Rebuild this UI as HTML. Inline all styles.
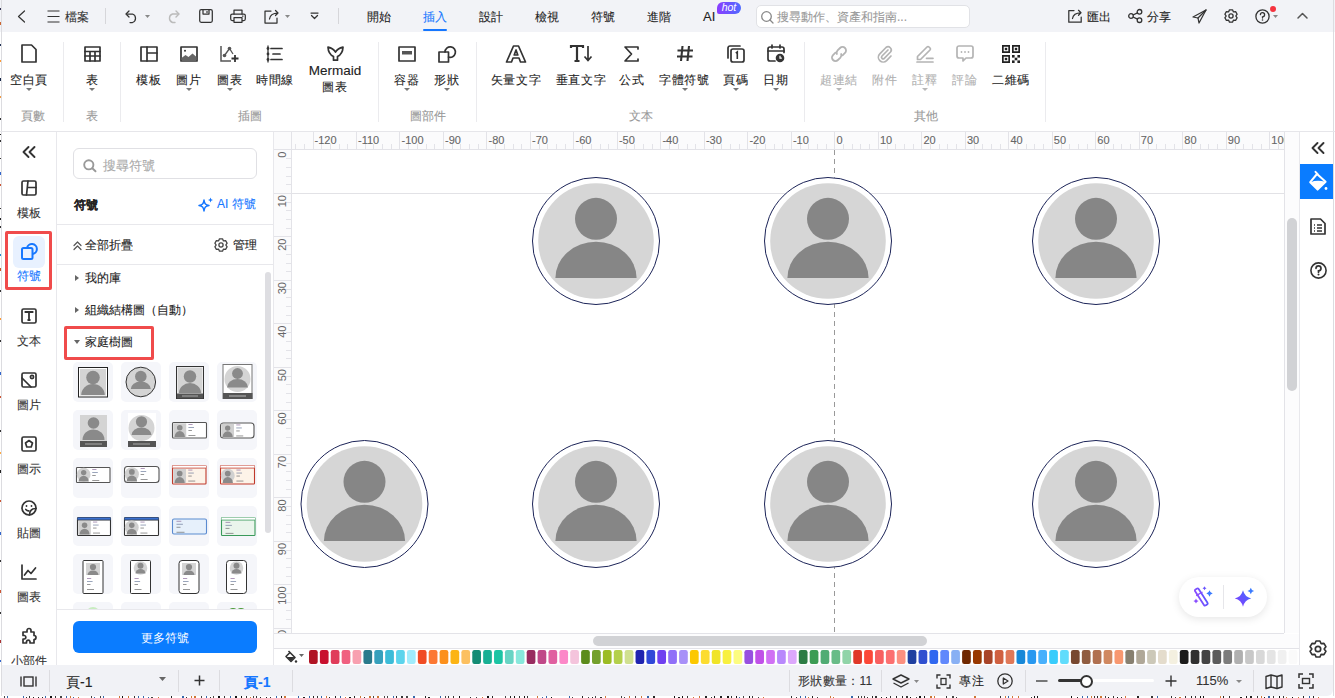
<!DOCTYPE html><html><head><meta charset="utf-8"><style>
html,body{margin:0;padding:0;}
body{width:1335px;height:698px;position:relative;overflow:hidden;background:#fff;font-family:'Liberation Sans', sans-serif;}
.t{position:absolute;white-space:nowrap;-webkit-text-stroke:0.1px currentColor;}
svg{overflow:visible}
</style></head><body>
<div style="position:absolute;left:0px;top:0px;width:1335px;height:32px;background:#f2f3f7"></div>
<div style="position:absolute;left:1px;top:0px;width:1px;height:696px;background:#dcdce0"></div>
<div style="position:absolute;left:1333px;top:0px;width:1px;height:696px;background:#dcdce0"></div>
<svg style="position:absolute;left:17px;top:10px" width="9" height="13" viewBox="0 0 9 13" fill="none"><path d="M7.5 1L1.5 6.5L7.5 12" stroke="#333" stroke-width="1.2" stroke-linecap="round" stroke-linejoin="round"/></svg>
<svg style="position:absolute;left:47px;top:10px" width="13" height="13" viewBox="0 0 13 13" fill="none"><path d="M0.5 1H12.5M0.5 6.5H12.5M0.5 12H12.5" stroke="#333" stroke-width="1.2"/></svg>
<div class="t" style="left:65px;top:9px;font-size:12px;line-height:16px;color:#333;font-weight:normal;">檔案</div>
<div style="position:absolute;left:105px;top:8px;width:1px;height:16px;background:#d6d6da"></div>
<svg style="position:absolute;left:125px;top:10px" width="13" height="13" viewBox="0 0 13 13" fill="none"><path d="M4 1L1 4L4 7" stroke="#333" stroke-width="1.25" stroke-linecap="round" stroke-linejoin="round"/><path d="M1.5 4H7.5A4.5 4.5 0 0 1 7.5 12.5H5" stroke="#333" stroke-width="1.25" stroke-linecap="round" stroke-linejoin="round"/></svg>
<svg style="position:absolute;left:145.0px;top:15.0px" width="5" height="3" viewBox="0 0 5 3" fill="none"><path d="M0 0H5L2.5 3Z" fill="#888"/></svg>
<svg style="position:absolute;left:167px;top:10px" width="13" height="13" viewBox="0 0 13 13" fill="none"><path d="M9 1L12 4L9 7" stroke="#bbb" stroke-width="1.4" stroke-linecap="round" stroke-linejoin="round"/><path d="M11.5 4H5.5A4.5 4.5 0 0 0 5.5 12.5H8" stroke="#bbb" stroke-width="1.4" stroke-linecap="round"/></svg>
<svg style="position:absolute;left:199px;top:9px" width="14" height="14" viewBox="0 0 14 14" fill="none"><rect x="0.7" y="0.7" width="12.6" height="12.6" rx="1.5" stroke="#333" stroke-width="1.25" stroke-linecap="round" stroke-linejoin="round"/><path d="M4 1V5H10V1" stroke="#333" stroke-width="1.25" stroke-linecap="round" stroke-linejoin="round"/><path d="M8 2.5V3.5" stroke="#333" stroke-width="1.25" stroke-linecap="round" stroke-linejoin="round"/></svg>
<svg style="position:absolute;left:230px;top:9px" width="16" height="14" viewBox="0 0 16 14" fill="none"><path d="M4 5V1H12V5" stroke="#333" stroke-width="1.25" stroke-linecap="round" stroke-linejoin="round"/><rect x="0.7" y="5" width="14.6" height="6.5" rx="1.5" stroke="#333" stroke-width="1.25" stroke-linecap="round" stroke-linejoin="round"/><rect x="4" y="8.5" width="8" height="4.8" fill="#f2f3f7" stroke="#333" stroke-width="1.25" stroke-linecap="round" stroke-linejoin="round"/><path d="M12.5 7H13" stroke="#333" stroke-width="1.25" stroke-linecap="round" stroke-linejoin="round"/></svg>
<svg style="position:absolute;left:264px;top:9px" width="16" height="15" viewBox="0 0 16 15" fill="none"><path d="M7 2H1V14H13V9" stroke="#333" stroke-width="1.25" stroke-linecap="round" stroke-linejoin="round"/><path d="M5.5 10C6 6 9 4 14 4M11.5 1.5L14 4L11.5 6.5" stroke="#333" stroke-width="1.25" stroke-linecap="round" stroke-linejoin="round"/></svg>
<svg style="position:absolute;left:285.0px;top:15.0px" width="5" height="3" viewBox="0 0 5 3" fill="none"><path d="M0 0H5L2.5 3Z" fill="#888"/></svg>
<svg style="position:absolute;left:310px;top:12px" width="9" height="8" viewBox="0 0 9 8" fill="none"><path d="M1 1H8" stroke="#333" stroke-width="1.25" stroke-linecap="round" stroke-linejoin="round"/><path d="M1.5 3.5L4.5 6.5L7.5 3.5" stroke="#333" stroke-width="1.25" stroke-linecap="round" stroke-linejoin="round"/></svg>
<div style="position:absolute;left:338px;top:8px;width:1px;height:16px;background:#d6d6da"></div>
<div class="t" style="left:367px;top:9px;font-size:12px;line-height:16px;color:#222;font-weight:normal;">開始</div>
<div class="t" style="left:423px;top:9px;font-size:12px;line-height:16px;color:#1677ff;font-weight:normal;">插入</div>
<div class="t" style="left:479px;top:9px;font-size:12px;line-height:16px;color:#222;font-weight:normal;">設計</div>
<div class="t" style="left:535px;top:9px;font-size:12px;line-height:16px;color:#222;font-weight:normal;">檢視</div>
<div class="t" style="left:591px;top:9px;font-size:12px;line-height:16px;color:#222;font-weight:normal;">符號</div>
<div class="t" style="left:647px;top:9px;font-size:12px;line-height:16px;color:#222;font-weight:normal;">進階</div>
<div style="position:absolute;left:423px;top:29px;width:24px;height:2px;background:#1677ff;border-radius:1px"></div>
<div class="t" style="left:703px;top:9px;font-size:13px;line-height:16px;color:#222;font-weight:normal;">AI</div>
<div style="position:absolute;left:717px;top:2px;width:24px;height:12px;border-radius:6px 6px 6px 2px;background:linear-gradient(90deg,#8b3dff,#4e6bff);color:#fff;font-size:10.5px;line-height:11px;text-align:center;font-style:italic;font-family:'Liberation Sans',sans-serif">hot</div>
<div style="position:absolute;left:756px;top:5px;width:214px;height:23px;background:#fff;border:1px solid #e1e2e6;border-radius:5px;box-sizing:border-box"></div>
<svg style="position:absolute;left:761px;top:11px" width="13" height="13" viewBox="0 0 13 13" fill="none"><circle cx="5.5" cy="5.5" r="4.8" stroke="#888" stroke-width="1.3"/><path d="M9 9L12 12" stroke="#888" stroke-width="1.3" stroke-linecap="round"/></svg>
<div class="t" style="left:777px;top:9px;font-size:12px;line-height:16px;color:#999;font-weight:normal;">搜尋動作、資產和指南...</div>
<svg style="position:absolute;left:1068px;top:9px" width="15" height="14" viewBox="0 0 15 14" fill="none"><path d="M6 1.5H0.8V13.2H13.2V8" stroke="#333" stroke-width="1.25" stroke-linecap="round" stroke-linejoin="round"/><path d="M4.5 9.5C5 6 8 3.8 13 3.8M10.5 1.3L13 3.8L10.5 6.3" stroke="#333" stroke-width="1.25" stroke-linecap="round" stroke-linejoin="round"/></svg>
<div class="t" style="left:1087px;top:9px;font-size:12px;line-height:16px;color:#222;font-weight:normal;">匯出</div>
<svg style="position:absolute;left:1128px;top:9px" width="15" height="14" viewBox="0 0 15 14" fill="none"><circle cx="3" cy="7" r="2.3" stroke="#333" stroke-width="1.3"/><circle cx="11.5" cy="2.8" r="2.3" stroke="#333" stroke-width="1.3"/><circle cx="11.5" cy="11.2" r="2.3" stroke="#333" stroke-width="1.3"/><path d="M5 6L9.5 3.8M5 8L9.5 10.2" stroke="#333" stroke-width="1.3"/></svg>
<div class="t" style="left:1147px;top:9px;font-size:12px;line-height:16px;color:#222;font-weight:normal;">分享</div>
<svg style="position:absolute;left:1192px;top:9px" width="15" height="15" viewBox="0 0 15 15" fill="none"><path d="M14 1L1 8L6 9L7 14L14 1Z" stroke="#333" stroke-width="1.25" stroke-linecap="round" stroke-linejoin="round"/><path d="M6 9L14 1" stroke="#333" stroke-width="1.25" stroke-linecap="round" stroke-linejoin="round"/></svg>
<svg style="position:absolute;left:1224px;top:9px" width="14" height="14" viewBox="0 0 14 14" fill="none"><path d="M4.65 2.70 L5.48 0.78 L8.52 0.78 L9.35 2.70 L9.55 2.82 L11.62 2.57 L13.14 5.21 L11.90 6.88 L11.90 7.12 L13.14 8.79 L11.62 11.43 L9.55 11.18 L9.35 11.30 L8.52 13.22 L5.48 13.22 L4.65 11.30 L4.45 11.18 L2.38 11.43 L0.86 8.79 L2.10 7.12 L2.10 6.88 L0.86 5.21 L2.38 2.57 L4.45 2.82Z" stroke="#333" stroke-width="1.3" stroke-linejoin="round"/><circle cx="7" cy="7" r="2.1" stroke="#333" stroke-width="1.3"/></svg>
<svg style="position:absolute;left:1255px;top:9px" width="15" height="15" viewBox="0 0 15 15" fill="none"><circle cx="7.5" cy="7.5" r="6.6" stroke="#333" stroke-width="1.3"/><path d="M5.4 5.6A2.1 2.1 0 1 1 7.5 7.8V9" stroke="#333" stroke-width="1.3" stroke-linecap="round"/><circle cx="7.5" cy="11" r="0.8" fill="#333"/></svg>
<div style="position:absolute;left:1270px;top:6px;width:6px;height:6px;background:#f5333f;border-radius:50%"></div>
<svg style="position:absolute;left:1273.0px;top:14.5px" width="5" height="3" viewBox="0 0 5 3" fill="none"><path d="M0 0H5L2.5 3Z" fill="#888"/></svg>
<svg style="position:absolute;left:1297px;top:12px" width="11" height="7" viewBox="0 0 11 7" fill="none"><path d="M1 6L5.5 1.5L10 6" stroke="#555" stroke-width="1.5" stroke-linecap="round" stroke-linejoin="round"/></svg>
<div style="position:absolute;left:0px;top:131px;width:1335px;height:1px;background:#e6e6ea"></div>
<div style="position:absolute;left:63px;top:42px;width:1px;height:80px;background:#ebebee"></div>
<div style="position:absolute;left:120px;top:42px;width:1px;height:80px;background:#ebebee"></div>
<div style="position:absolute;left:378px;top:42px;width:1px;height:80px;background:#ebebee"></div>
<div style="position:absolute;left:476px;top:42px;width:1px;height:80px;background:#ebebee"></div>
<div style="position:absolute;left:804px;top:42px;width:1px;height:80px;background:#ebebee"></div>
<div style="position:absolute;left:1045px;top:42px;width:1px;height:80px;background:#ebebee"></div>
<svg style="position:absolute;left:21px;top:44px" width="16" height="19" viewBox="0 0 16 19" fill="none"><path d="M1 1H10.5L15 5.5V18H1Z" stroke="#333" stroke-width="1.7" stroke-linejoin="round" stroke-linecap="round"/></svg>
<div class="t" style="left:-31.0px;width:120px;text-align:center;top:72px;font-size:12px;line-height:16px;color:#222;font-weight:normal;letter-spacing:0.6px">空白頁</div>
<svg style="position:absolute;left:26.0px;top:88.0px" width="6" height="3" viewBox="0 0 6 3" fill="none"><path d="M0 0H6L3.0 3Z" fill="#777"/></svg>
<svg style="position:absolute;left:84px;top:46px" width="17" height="16" viewBox="0 0 17 16" fill="none"><rect x="1" y="1" width="15" height="14" stroke="#333" stroke-width="1.7" stroke-linejoin="round" stroke-linecap="round"/><path d="M1 5.5H16M1 10H16M6 5.5V15M11 5.5V15" stroke="#333" stroke-width="1.7" stroke-linejoin="round" stroke-linecap="round"/></svg>
<div class="t" style="left:32.0px;width:120px;text-align:center;top:72px;font-size:12px;line-height:16px;color:#222;font-weight:normal;letter-spacing:0.6px">表</div>
<svg style="position:absolute;left:89.0px;top:88.0px" width="6" height="3" viewBox="0 0 6 3" fill="none"><path d="M0 0H6L3.0 3Z" fill="#777"/></svg>
<svg style="position:absolute;left:140px;top:46px" width="18" height="16" viewBox="0 0 18 16" fill="none"><rect x="1" y="1" width="16" height="14" stroke="#333" stroke-width="1.7" stroke-linejoin="round" stroke-linecap="round"/><path d="M7 1V15M7 7H17" stroke="#333" stroke-width="1.7" stroke-linejoin="round" stroke-linecap="round"/></svg>
<div class="t" style="left:89.0px;width:120px;text-align:center;top:72px;font-size:12px;line-height:16px;color:#222;font-weight:normal;letter-spacing:0.6px">模板</div>
<svg style="position:absolute;left:180px;top:46px" width="18" height="16" viewBox="0 0 18 16" fill="none"><rect x="1" y="1" width="16" height="14" stroke="#333" stroke-width="1.7" stroke-linejoin="round" stroke-linecap="round"/><circle cx="5" cy="4.8" r="1" fill="#333"/><path d="M1.5 14.5V12L5.5 9L8.5 11L12.5 7.5L16.5 11V14.5Z" fill="#666"/></svg>
<div class="t" style="left:129.0px;width:120px;text-align:center;top:72px;font-size:12px;line-height:16px;color:#222;font-weight:normal;letter-spacing:0.6px">圖片</div>
<svg style="position:absolute;left:186.0px;top:88.0px" width="6" height="3" viewBox="0 0 6 3" fill="none"><path d="M0 0H6L3.0 3Z" fill="#777"/></svg>
<svg style="position:absolute;left:220px;top:45px" width="20" height="17" viewBox="0 0 20 17" fill="none"><path d="M1 1V16H11" stroke="#555" stroke-width="1.5"/><path d="M4.5 10.5L9.5 3.5L13 9" stroke="#555" stroke-width="1.3"/><circle cx="4.5" cy="10.5" r="1.8" fill="#555"/><circle cx="9.5" cy="3.5" r="1.8" fill="#555"/><path d="M15 10V17M11.5 13.5H18.5" stroke="#333" stroke-width="1.8"/></svg>
<div class="t" style="left:170.0px;width:120px;text-align:center;top:72px;font-size:12px;line-height:16px;color:#222;font-weight:normal;letter-spacing:0.6px">圖表</div>
<svg style="position:absolute;left:227.0px;top:88.0px" width="6" height="3" viewBox="0 0 6 3" fill="none"><path d="M0 0H6L3.0 3Z" fill="#777"/></svg>
<svg style="position:absolute;left:266px;top:45px" width="18" height="18" viewBox="0 0 18 18" fill="none"><path d="M2 0.5V17.5" stroke="#333" stroke-width="1.3"/><circle cx="2" cy="3.5" r="1.4" fill="#333"/><circle cx="2" cy="9" r="1.4" fill="#333"/><circle cx="2" cy="14.5" r="1.4" fill="#333"/><path d="M5 3.5H16M7 9H14M5 14.5H16" stroke="#333" stroke-width="1.7" stroke-linejoin="round" stroke-linecap="round"/></svg>
<div class="t" style="left:215.0px;width:120px;text-align:center;top:72px;font-size:12px;line-height:16px;color:#222;font-weight:normal;letter-spacing:0.6px">時間線</div>
<svg style="position:absolute;left:398px;top:46px" width="18" height="16" viewBox="0 0 18 16" fill="none"><rect x="1" y="1" width="16" height="14" stroke="#333" stroke-width="1.7" stroke-linejoin="round" stroke-linecap="round"/><rect x="4" y="5" width="10" height="3.5" fill="#555"/></svg>
<div class="t" style="left:347.0px;width:120px;text-align:center;top:72px;font-size:12px;line-height:16px;color:#222;font-weight:normal;letter-spacing:0.6px">容器</div>
<svg style="position:absolute;left:404.0px;top:88.0px" width="6" height="3" viewBox="0 0 6 3" fill="none"><path d="M0 0H6L3.0 3Z" fill="#777"/></svg>
<svg style="position:absolute;left:438px;top:45px" width="18" height="18" viewBox="0 0 18 18" fill="none"><rect x="1" y="7" width="9.5" height="10" stroke="#333" stroke-width="1.7" stroke-linejoin="round" stroke-linecap="round"/><path d="M7 7A5.2 5.2 0 1 1 10.5 12" stroke="#333" stroke-width="1.7" stroke-linejoin="round" stroke-linecap="round"/></svg>
<div class="t" style="left:387.0px;width:120px;text-align:center;top:72px;font-size:12px;line-height:16px;color:#222;font-weight:normal;letter-spacing:0.6px">形狀</div>
<svg style="position:absolute;left:444.0px;top:88.0px" width="6" height="3" viewBox="0 0 6 3" fill="none"><path d="M0 0H6L3.0 3Z" fill="#777"/></svg>
<svg style="position:absolute;left:505px;top:45px" width="22" height="18" viewBox="0 0 22 18" fill="none"><path d="M1.5 17L8.5 1H13.5L20.5 17H15.5L14 13H8L6.5 17Z" stroke="#333" stroke-width="1.7" stroke-linejoin="round" stroke-linecap="round"/><path d="M9.2 10H12.8L11 5Z" stroke="#333" stroke-width="1.7" stroke-linejoin="round" stroke-linecap="round"/></svg>
<div class="t" style="left:456.0px;width:120px;text-align:center;top:72px;font-size:12px;line-height:16px;color:#222;font-weight:normal;letter-spacing:0.6px">矢量文字</div>
<svg style="position:absolute;left:570px;top:45px" width="22" height="17" viewBox="0 0 22 17" fill="none"><path d="M1 3V1H13V3M7 1V16M4.5 16H9.5" stroke="#333" stroke-width="2.2" stroke-linejoin="miter"/><path d="M18 1V15M14.5 11.5L18 15.5L21.5 11.5" stroke="#333" stroke-width="1.7"/></svg>
<div class="t" style="left:521.0px;width:120px;text-align:center;top:72px;font-size:12px;line-height:16px;color:#222;font-weight:normal;letter-spacing:0.6px">垂直文字</div>
<svg style="position:absolute;left:624px;top:46px" width="15" height="16" viewBox="0 0 15 16" fill="none"><path d="M14 3V1H1L7.5 8L1 15H14V13" stroke="#333" stroke-width="1.7" stroke-linejoin="round" stroke-linecap="round"/></svg>
<div class="t" style="left:572.0px;width:120px;text-align:center;top:72px;font-size:12px;line-height:16px;color:#222;font-weight:normal;letter-spacing:0.6px">公式</div>
<svg style="position:absolute;left:676px;top:45px" width="18" height="17" viewBox="0 0 18 17" fill="none"><path d="M6.5 1L5 16M13 1L11.5 16M1.5 5.5H17M1 11.5H16.5" stroke="#333" stroke-width="2.1"/></svg>
<div class="t" style="left:624.5px;width:120px;text-align:center;top:72px;font-size:12px;line-height:16px;color:#222;font-weight:normal;letter-spacing:0.6px">字體符號</div>
<svg style="position:absolute;left:681.5px;top:88.0px" width="6" height="3" viewBox="0 0 6 3" fill="none"><path d="M0 0H6L3.0 3Z" fill="#777"/></svg>
<svg style="position:absolute;left:727px;top:45px" width="18" height="18" viewBox="0 0 18 18" fill="none"><path d="M1 13V3A2 2 0 0 1 3 1H13" stroke="#333" stroke-width="1.7" stroke-linejoin="round" stroke-linecap="round"/><rect x="4" y="4" width="13" height="13" rx="2" stroke="#333" stroke-width="1.7" stroke-linejoin="round" stroke-linecap="round"/><path d="M8.8 8.2L10.3 7V14" stroke="#333" stroke-width="1.6"/></svg>
<div class="t" style="left:676.0px;width:120px;text-align:center;top:72px;font-size:12px;line-height:16px;color:#222;font-weight:normal;letter-spacing:0.6px">頁碼</div>
<svg style="position:absolute;left:733.0px;top:88.0px" width="6" height="3" viewBox="0 0 6 3" fill="none"><path d="M0 0H6L3.0 3Z" fill="#777"/></svg>
<svg style="position:absolute;left:767px;top:44px" width="18" height="19" viewBox="0 0 18 19" fill="none"><path d="M8 17H3A2 2 0 0 1 1 15V5A2 2 0 0 1 3 3H15A2 2 0 0 1 17 5V8.5" stroke="#333" stroke-width="1.7" stroke-linejoin="round" stroke-linecap="round"/><path d="M1 7H17M5 1V4M13 1V4" stroke="#333" stroke-width="1.7" stroke-linejoin="round" stroke-linecap="round"/><circle cx="13" cy="14" r="4.3" fill="#333"/><path d="M13 11.8V14.2H14.8" stroke="#fff" stroke-width="1.2"/></svg>
<div class="t" style="left:716.0px;width:120px;text-align:center;top:72px;font-size:12px;line-height:16px;color:#222;font-weight:normal;letter-spacing:0.6px">日期</div>
<svg style="position:absolute;left:773.0px;top:88.0px" width="6" height="3" viewBox="0 0 6 3" fill="none"><path d="M0 0H6L3.0 3Z" fill="#777"/></svg>
<svg style="position:absolute;left:830px;top:45px" width="18" height="18" viewBox="0 0 18 18" fill="none"><g transform="rotate(-45 9 9)" stroke="#b4b4b4" stroke-width="1.8" fill="none" stroke-linecap="round"><path d="M7.5 5.5H4A3.5 3.5 0 0 0 4 12.5H7.5A3.5 3.5 0 0 0 10.5 10.5"/><path d="M10.5 12.5H14A3.5 3.5 0 0 0 14 5.5H10.5A3.5 3.5 0 0 0 7.5 7.5"/></g></svg>
<div class="t" style="left:779.0px;width:120px;text-align:center;top:72px;font-size:12px;line-height:16px;color:#b0b0b0;font-weight:normal;letter-spacing:0.6px">超連結</div>
<svg style="position:absolute;left:836.0px;top:88.0px" width="6" height="3" viewBox="0 0 6 3" fill="none"><path d="M0 0H6L3.0 3Z" fill="#b8b8b8"/></svg>
<svg style="position:absolute;left:876px;top:45px" width="18" height="18" viewBox="0 0 18 18" fill="none"><path d="M12 5L6 11A1.6 1.6 0 0 0 8.3 13.3L14.5 7A3.2 3.2 0 0 0 10 2.5L3.8 8.8A4.8 4.8 0 0 0 10.6 15.6L15 11" stroke="#b4b4b4" stroke-width="1.7" stroke-linejoin="round" stroke-linecap="round"/></svg>
<div class="t" style="left:825.0px;width:120px;text-align:center;top:72px;font-size:12px;line-height:16px;color:#b0b0b0;font-weight:normal;letter-spacing:0.6px">附件</div>
<svg style="position:absolute;left:916px;top:45px" width="18" height="18" viewBox="0 0 18 18" fill="none"><path d="M1.5 14.5V11.5L11 2A1.4 1.4 0 0 1 13 2L14 3A1.4 1.4 0 0 1 14 5L4.5 14.5Z" stroke="#b4b4b4" stroke-width="1.7" stroke-linejoin="round" stroke-linecap="round"/><path d="M10.5 13.3H17M1 17H17" stroke="#b4b4b4" stroke-width="1.7" stroke-linejoin="round" stroke-linecap="round"/></svg>
<div class="t" style="left:865.0px;width:120px;text-align:center;top:72px;font-size:12px;line-height:16px;color:#b0b0b0;font-weight:normal;letter-spacing:0.6px">註釋</div>
<svg style="position:absolute;left:922.0px;top:88.0px" width="6" height="3" viewBox="0 0 6 3" fill="none"><path d="M0 0H6L3.0 3Z" fill="#b8b8b8"/></svg>
<svg style="position:absolute;left:956px;top:45px" width="18" height="17" viewBox="0 0 18 17" fill="none"><path d="M3 1H15A2 2 0 0 1 17 3V11A2 2 0 0 1 15 13H10L7 16V13H3A2 2 0 0 1 1 11V3A2 2 0 0 1 3 1Z" stroke="#b4b4b4" stroke-width="1.7" stroke-linejoin="round" stroke-linecap="round"/><circle cx="5.5" cy="7" r="0.9" fill="#b4b4b4"/><circle cx="9" cy="7" r="0.9" fill="#b4b4b4"/><circle cx="12.5" cy="7" r="0.9" fill="#b4b4b4"/></svg>
<div class="t" style="left:905.0px;width:120px;text-align:center;top:72px;font-size:12px;line-height:16px;color:#b0b0b0;font-weight:normal;letter-spacing:0.6px">評論</div>
<svg style="position:absolute;left:1002px;top:45px" width="18" height="18" viewBox="0 0 18 18" fill="none"><g fill="#222"><path d="M0 0H8V8H0ZM1.7 1.7V6.3H6.3V1.7Z" fill-rule="evenodd"/><path d="M10 0H18V8H10ZM11.7 1.7V6.3H16.3V1.7Z" fill-rule="evenodd"/><path d="M0 10H8V18H0ZM1.7 11.7V16.3H6.3V11.7Z" fill-rule="evenodd"/><rect x="2.8" y="2.8" width="2.4" height="2.4"/><rect x="12.8" y="2.8" width="2.4" height="2.4"/><rect x="2.8" y="12.8" width="2.4" height="2.4"/><rect x="10" y="10" width="2.6" height="2.6"/><rect x="15.4" y="10" width="2.6" height="2.6"/><rect x="12.7" y="12.7" width="2.6" height="2.6"/><rect x="10" y="15.4" width="2.6" height="2.6"/><rect x="15.4" y="15.4" width="2.6" height="2.6"/></g></svg>
<div class="t" style="left:951.0px;width:120px;text-align:center;top:72px;font-size:12px;line-height:16px;color:#222;font-weight:normal;letter-spacing:0.6px">二維碼</div>
<svg style="position:absolute;left:327px;top:46px" width="17" height="15" viewBox="0 0 17 15" fill="none"><path d="M6.5 14.2V10.5C3.5 9 1.2 5.5 1 1.2C4 1.8 7 3.5 8.5 6.2C10 3.5 13 1.8 16 1.2C15.8 5.5 13.5 9 10.5 10.5V14.2Z" stroke="#333" stroke-width="1.7" stroke-linejoin="round" stroke-linecap="round"/></svg>
<div class="t" style="left:275.0px;width:120px;text-align:center;top:64px;font-size:13.5px;line-height:14px;color:#222;font-weight:normal;">Mermaid</div>
<div class="t" style="left:275.0px;width:120px;text-align:center;top:79px;font-size:12px;line-height:16px;color:#222;font-weight:normal;letter-spacing:0.6px">圖表</div>
<div class="t" style="left:-27.0px;width:120px;text-align:center;top:108px;font-size:12px;line-height:16px;color:#999;font-weight:normal;">頁數</div>
<div class="t" style="left:32.0px;width:120px;text-align:center;top:108px;font-size:12px;line-height:16px;color:#999;font-weight:normal;">表</div>
<div class="t" style="left:190.0px;width:120px;text-align:center;top:108px;font-size:12px;line-height:16px;color:#999;font-weight:normal;">插圖</div>
<div class="t" style="left:368.0px;width:120px;text-align:center;top:108px;font-size:12px;line-height:16px;color:#999;font-weight:normal;">圖部件</div>
<div class="t" style="left:581.0px;width:120px;text-align:center;top:108px;font-size:12px;line-height:16px;color:#999;font-weight:normal;">文本</div>
<div class="t" style="left:866.0px;width:120px;text-align:center;top:108px;font-size:12px;line-height:16px;color:#999;font-weight:normal;">其他</div>
<div style="position:absolute;left:56px;top:132px;width:1px;height:533px;background:#e8e8ec"></div>
<svg style="position:absolute;left:22px;top:146px" width="14" height="12" viewBox="0 0 14 12" fill="none"><path d="M6.5 1L1.5 6L6.5 11M12.5 1L7.5 6L12.5 11" stroke="#333" stroke-width="1.9" stroke-linecap="round" stroke-linejoin="round"/></svg>
<svg style="position:absolute;left:21px;top:180px" width="16" height="16" viewBox="0 0 16 16" fill="none"><rect x="1" y="1" width="14" height="14" rx="1.5" stroke="#333" stroke-width="1.7" stroke-linejoin="round" stroke-linecap="round"/><path d="M7 1L5.5 15M6.5 7.5H15" stroke="#333" stroke-width="1.7" stroke-linejoin="round" stroke-linecap="round"/></svg>
<div class="t" style="left:1.0px;width:56px;text-align:center;top:205px;font-size:12px;line-height:16px;color:#333;font-weight:normal;">模板</div>
<svg style="position:absolute;left:21px;top:308px" width="16" height="16" viewBox="0 0 16 16" fill="none"><rect x="1" y="1" width="14" height="14" rx="1.5" stroke="#333" stroke-width="1.7" stroke-linejoin="round" stroke-linecap="round"/><path d="M4.5 5V4H11.5V5M8 4V12M6.5 12H9.5" stroke="#333" stroke-width="1.8"/></svg>
<div class="t" style="left:1.0px;width:56px;text-align:center;top:333px;font-size:12px;line-height:16px;color:#333;font-weight:normal;">文本</div>
<svg style="position:absolute;left:21px;top:372px" width="16" height="16" viewBox="0 0 16 16" fill="none"><rect x="1" y="1" width="14" height="14" rx="1.5" stroke="#333" stroke-width="1.7" stroke-linejoin="round" stroke-linecap="round"/><path d="M1 6L10 15" stroke="#333" stroke-width="1.7" stroke-linejoin="round" stroke-linecap="round"/><circle cx="11" cy="5" r="1.6" stroke="#333" stroke-width="1.7" stroke-linejoin="round" stroke-linecap="round"/></svg>
<div class="t" style="left:1.0px;width:56px;text-align:center;top:397px;font-size:12px;line-height:16px;color:#333;font-weight:normal;">圖片</div>
<svg style="position:absolute;left:21px;top:436px" width="16" height="16" viewBox="0 0 16 16" fill="none"><rect x="1" y="1" width="14" height="14" rx="1.5" stroke="#333" stroke-width="1.7" stroke-linejoin="round" stroke-linecap="round"/><path d="M8 4.5L11.5 7L10.2 11H5.8L4.5 7Z" stroke="#333" stroke-width="1.7" stroke-linejoin="round" stroke-linecap="round"/></svg>
<div class="t" style="left:1.0px;width:56px;text-align:center;top:461px;font-size:12px;line-height:16px;color:#333;font-weight:normal;">圖示</div>
<svg style="position:absolute;left:21px;top:500px" width="16" height="16" viewBox="0 0 16 16" fill="none"><circle cx="8" cy="8" r="7" stroke="#333" stroke-width="1.7" stroke-linejoin="round" stroke-linecap="round"/><path d="M15 8.5C11 8.5 8.5 11 8.5 15" stroke="#333" stroke-width="1.7" stroke-linejoin="round" stroke-linecap="round"/><circle cx="5.5" cy="6" r="0.9" fill="#333"/><circle cx="10.5" cy="6" r="0.9" fill="#333"/><path d="M4.8 9.5C5.8 10.6 6.8 11 7.8 10.8" stroke="#333" stroke-width="1.7" stroke-linejoin="round" stroke-linecap="round"/></svg>
<div class="t" style="left:1.0px;width:56px;text-align:center;top:525px;font-size:12px;line-height:16px;color:#333;font-weight:normal;">貼圖</div>
<svg style="position:absolute;left:21px;top:564px" width="16" height="16" viewBox="0 0 16 16" fill="none"><path d="M1 1V15H15" stroke="#333" stroke-width="1.7" stroke-linejoin="round" stroke-linecap="round"/><path d="M3.5 11L7 6.5L10 9.5L14.5 4" stroke="#333" stroke-width="1.7" stroke-linejoin="round" stroke-linecap="round"/></svg>
<div class="t" style="left:1.0px;width:56px;text-align:center;top:589px;font-size:12px;line-height:16px;color:#333;font-weight:normal;">圖表</div>
<svg style="position:absolute;left:21px;top:628px" width="16" height="16" viewBox="0 0 16 16" fill="none"><path d="M6 2.5A2 2 0 0 1 10 2.5V4H13V7.5A2 2 0 0 1 13 11.5V15H9V13.5A1.8 1.8 0 0 0 5.5 13.5V15H2V11H3.5A1.8 1.8 0 0 0 3.5 7.5H2V4H6Z" stroke="#333" stroke-width="1.7" stroke-linejoin="round" stroke-linecap="round"/></svg>
<div class="t" style="left:1.0px;width:56px;text-align:center;top:653px;font-size:12px;line-height:16px;color:#333;font-weight:normal;">小部件</div>
<div style="position:absolute;left:13px;top:236px;width:32px;height:32px;background:#e8f1ff;border-radius:6px"></div>
<svg style="position:absolute;left:21px;top:243px" width="17" height="17" viewBox="0 0 17 17" fill="none"><rect x="1" y="5" width="10.5" height="11" rx="1.5" stroke="#1677ff" stroke-width="2"/><path d="M6 5A5 5 0 1 1 11.5 11" stroke="#1677ff" stroke-width="2"/></svg>
<div class="t" style="left:1.0px;width:56px;text-align:center;top:268px;font-size:12px;line-height:16px;color:#1677ff;font-weight:normal;">符號</div>
<div style="position:absolute;left:5px;top:231px;width:47px;height:59px;border:3.5px solid #f04b4b;border-radius:2px;box-sizing:border-box"></div>
<div style="position:absolute;left:273px;top:132px;width:1px;height:533px;background:#e8e8ec"></div>
<div style="position:absolute;left:73px;top:148px;width:184px;height:31px;border:1px solid #e0e0e4;border-radius:6px;box-sizing:border-box;background:#fff"></div>
<svg style="position:absolute;left:83px;top:159px" width="14" height="13" viewBox="0 0 14 13" fill="none"><circle cx="5.8" cy="5.8" r="4.6" stroke="#999" stroke-width="1.9"/><path d="M9.3 9.3L12.5 12.3" stroke="#999" stroke-width="1.9" stroke-linecap="round"/></svg>
<div class="t" style="left:103px;top:158px;font-size:13px;line-height:16px;color:#aaa;font-weight:normal;">搜尋符號</div>
<div class="t" style="left:74px;top:197px;font-size:12px;line-height:16px;color:#222;font-weight:bold;">符號</div>
<svg style="position:absolute;left:197px;top:197px" width="17" height="15" viewBox="0 0 17 15" fill="none"><path d="M7 3C7.6 7 8.5 8 12 8.5C8.5 9 7.6 10 7 14C6.4 10 5.5 9 2 8.5C5.5 8 6.4 7 7 3Z" stroke="#1677ff" stroke-width="1.5" stroke-linejoin="round"/><path d="M13.5 0.5L14.2 2.3L16 3L14.2 3.7L13.5 5.5L12.8 3.7L11 3L12.8 2.3Z" fill="#1677ff"/></svg>
<div class="t" style="left:217px;top:196px;font-size:12px;line-height:16px;color:#1677ff;font-weight:normal;">AI 符號</div>
<div style="position:absolute;left:56px;top:224px;width:217px;height:1px;background:#e8e8ec"></div>
<svg style="position:absolute;left:73px;top:241px" width="9" height="9" viewBox="0 0 9 9" fill="none"><path d="M1 4.5L4.5 1L8 4.5M1 8.5L4.5 5L8 8.5" stroke="#555" stroke-width="1.2" stroke-linecap="round" stroke-linejoin="round"/></svg>
<div class="t" style="left:85px;top:237px;font-size:12px;line-height:16px;color:#222;font-weight:normal;">全部折疊</div>
<svg style="position:absolute;left:214px;top:238px" width="14" height="14" viewBox="0 0 14 14" fill="none"><path d="M4.65 2.70 L5.48 0.78 L8.52 0.78 L9.35 2.70 L9.55 2.82 L11.62 2.57 L13.14 5.21 L11.90 6.88 L11.90 7.12 L13.14 8.79 L11.62 11.43 L9.55 11.18 L9.35 11.30 L8.52 13.22 L5.48 13.22 L4.65 11.30 L4.45 11.18 L2.38 11.43 L0.86 8.79 L2.10 7.12 L2.10 6.88 L0.86 5.21 L2.38 2.57 L4.45 2.82Z" stroke="#444" stroke-width="1.3" stroke-linejoin="round"/><circle cx="7" cy="7" r="2.1" stroke="#444" stroke-width="1.3"/></svg>
<div class="t" style="left:233px;top:237px;font-size:12px;line-height:16px;color:#222;font-weight:normal;">管理</div>
<div style="position:absolute;left:56px;top:264px;width:217px;height:1px;background:#e8e8ec"></div>
<svg style="position:absolute;left:75px;top:275px" width="4" height="6" viewBox="0 0 4 6" fill="none"><path d="M0 0L4 3L0 6Z" fill="#666"/></svg>
<div class="t" style="left:85px;top:270px;font-size:12px;line-height:16px;color:#222;font-weight:normal;">我的庫</div>
<svg style="position:absolute;left:75px;top:307px" width="4" height="6" viewBox="0 0 4 6" fill="none"><path d="M0 0L4 3L0 6Z" fill="#666"/></svg>
<div class="t" style="left:85px;top:302px;font-size:12px;line-height:16px;color:#222;font-weight:normal;">組織結構圖（自動）</div>
<svg style="position:absolute;left:74px;top:340px" width="6" height="4" viewBox="0 0 6 4" fill="none"><path d="M0 0H6L3 4Z" fill="#666"/></svg>
<div class="t" style="left:85px;top:334px;font-size:12px;line-height:16px;color:#222;font-weight:normal;">家庭樹圖</div>
<div style="position:absolute;left:64px;top:326px;width:90px;height:34px;border:3.5px solid #f04b4b;border-radius:2px;box-sizing:border-box"></div>
<div style="position:absolute;left:265px;top:272px;width:6px;height:261px;background:#dedee2;border-radius:3px"></div>
<div style="position:absolute;left:56px;top:609px;width:217px;height:1px;background:#e8e8ec"></div>
<div style="position:absolute;left:73px;top:621px;width:184px;height:32px;background:#0a7cff;border-radius:6px;color:#fff;font-size:12px;line-height:34px;text-align:center">更多符號</div>
<div style="position:absolute;left:56px;top:362px;width:210px;height:247px;overflow:hidden">
<div style="position:absolute;left:17px;top:0px;width:40px;height:40px;background:#f5f6fa;border-radius:5px"></div>
<svg style="position:absolute;left:17px;top:0px" width="40" height="40" viewBox="0 0 40 40"><rect x="5.5" y="5.5" width="29" height="29.5" fill="#fff" stroke="#222" stroke-width="1"/><rect x="7" y="7" width="26" height="26.5" fill="#d4d4d4"/><circle cx="20" cy="15.5" r="6.8" fill="#8a8a8a"/><path d="M8.25 33A11.75 11 0 0 1 31.75 33Z" fill="#8a8a8a"/></svg>
<div style="position:absolute;left:65px;top:0px;width:40px;height:40px;background:#f5f6fa;border-radius:5px"></div>
<svg style="position:absolute;left:65px;top:0px" width="40" height="40" viewBox="0 0 40 40"><circle cx="19.8" cy="20" r="14.8" fill="#d4d4d4" stroke="#333" stroke-width="1"/><circle cx="19.8" cy="14.5" r="5.8" fill="#8a8a8a"/><path d="M9.8 27A10.0 7.5 0 0 1 29.8 27Z" fill="#8a8a8a"/></svg>
<div style="position:absolute;left:113px;top:0px;width:40px;height:40px;background:#f5f6fa;border-radius:5px"></div>
<svg style="position:absolute;left:113px;top:0px" width="40" height="40" viewBox="0 0 40 40"><rect x="7.5" y="4.5" width="27" height="32" fill="#fff" stroke="#333" stroke-width="1"/><rect x="8.5" y="5.5" width="25" height="26" fill="#d4d4d4"/><circle cx="21" cy="14.5" r="6.2" fill="#8a8a8a"/><path d="M10.0 31A11.0 10 0 0 1 32.0 31Z" fill="#8a8a8a"/><rect x="8" y="31.5" width="26" height="5" fill="#555"/><rect x="13" y="33.5" width="16" height="1" fill="#aaa"/></svg>
<div style="position:absolute;left:161px;top:0px;width:40px;height:40px;background:#f5f6fa;border-radius:5px"></div>
<svg style="position:absolute;left:161px;top:0px" width="40" height="40" viewBox="0 0 40 40"><rect x="6" y="2.5" width="29" height="34" fill="#fff" stroke="#777" stroke-width="1"/><circle cx="20.5" cy="17" r="13" fill="#d4d4d4"/><circle cx="20.5" cy="11.5" r="5.4" fill="#8a8a8a"/><path d="M10.0 25.5A10.5 8.5 0 0 1 31.0 25.5Z" fill="#8a8a8a"/><rect x="6" y="31" width="29.5" height="6" fill="#555"/><rect x="12" y="33.5" width="17" height="1" fill="#bbb"/></svg>
<div style="position:absolute;left:17px;top:48px;width:40px;height:40px;background:#f5f6fa;border-radius:5px"></div>
<svg style="position:absolute;left:17px;top:48px" width="40" height="40" viewBox="0 0 40 40"><rect x="7" y="5" width="27" height="26" fill="#d4d4d4"/><circle cx="20.5" cy="13" r="5.8" fill="#8a8a8a"/><path d="M9.5 30A11.0 10.5 0 0 1 31.5 30Z" fill="#8a8a8a"/><rect x="7" y="31" width="27" height="6" fill="#555"/><rect x="12" y="33.5" width="17" height="1" fill="#aaa"/></svg>
<div style="position:absolute;left:65px;top:48px;width:40px;height:40px;background:#f5f6fa;border-radius:5px"></div>
<svg style="position:absolute;left:65px;top:48px" width="40" height="40" viewBox="0 0 40 40"><rect x="7" y="3" width="28" height="34" fill="#fff"/><circle cx="20.5" cy="18" r="13" fill="#d4d4d4"/><circle cx="20.5" cy="11.8" r="5.6" fill="#8a8a8a"/><path d="M10.5 25A10.0 7.5 0 0 1 30.5 25Z" fill="#8a8a8a"/><rect x="7" y="31" width="28" height="6" fill="#555"/><rect x="12" y="33.5" width="17" height="1" fill="#aaa"/></svg>
<div style="position:absolute;left:113px;top:48px;width:40px;height:40px;background:#f5f6fa;border-radius:5px"></div>
<svg style="position:absolute;left:113px;top:48px" width="40" height="40" viewBox="0 0 40 40"><rect x="3.5" y="12.5" width="34" height="15.5" rx="1" fill="#fff" stroke="#555" stroke-width="1.1"/><rect x="4.3" y="13.3" width="12.92" height="13.9" fill="#d0d0d0"/><circle cx="10.76" cy="17.782" r="2.7800000000000002" fill="#8a8a8a"/><path d="M5.592 27.0A5.168 5.881999999999998 0 0 1 15.928 27.0Z" fill="#8a8a8a"/><rect x="19.42" y="14.0" width="4.2" height="0.9" fill="#8a6a9a" opacity="0.75"/><rect x="19.42" y="17.0" width="5.6000000000000005" height="0.9" fill="#6a7a9a" opacity="0.75"/><rect x="19.42" y="20.0" width="3.5" height="0.9" fill="#666" opacity="0.75"/><rect x="19.42" y="25.0" width="7" height="0.9" fill="#666" opacity="0.75"/></svg>
<div style="position:absolute;left:161px;top:48px;width:40px;height:40px;background:#f5f6fa;border-radius:5px"></div>
<svg style="position:absolute;left:161px;top:48px" width="40" height="40" viewBox="0 0 40 40"><rect x="3.5" y="13" width="33.5" height="15" rx="3" fill="#fff" stroke="#555" stroke-width="1.1"/><rect x="4.3" y="13.8" width="12.73" height="13.4" fill="#d0d0d0"/><circle cx="10.665" cy="18.092" r="2.68" fill="#8a8a8a"/><path d="M5.572999999999999 27A5.0920000000000005 5.692 0 0 1 15.757 27Z" fill="#8a8a8a"/><rect x="19.23" y="14.5" width="4.2" height="0.9" fill="#8a6a9a" opacity="0.75"/><rect x="19.23" y="17.5" width="5.6000000000000005" height="0.9" fill="#6a7a9a" opacity="0.75"/><rect x="19.23" y="20.5" width="3.5" height="0.9" fill="#666" opacity="0.75"/><rect x="19.23" y="25.5" width="7" height="0.9" fill="#666" opacity="0.75"/></svg>
<div style="position:absolute;left:17px;top:96px;width:40px;height:40px;background:#f5f6fa;border-radius:5px"></div>
<svg style="position:absolute;left:17px;top:96px" width="40" height="40" viewBox="0 0 40 40"><rect x="3.5" y="9.5" width="33.5" height="15" rx="0.8" fill="#fff" stroke="#555" stroke-width="1.1"/><circle cx="10.665" cy="16.7" r="6.865" fill="#d0d0d0"/><circle cx="10.665" cy="14.592" r="2.68" fill="#8a8a8a"/><path d="M5.572999999999999 23.5A5.0920000000000005 5.692 0 0 1 15.757 23.5Z" fill="#8a8a8a"/><rect x="19.23" y="11.0" width="4.2" height="0.9" fill="#8a6a9a" opacity="0.75"/><rect x="19.23" y="14.0" width="5.6000000000000005" height="0.9" fill="#6a7a9a" opacity="0.75"/><rect x="19.23" y="17.0" width="3.5" height="0.9" fill="#666" opacity="0.75"/><rect x="19.23" y="22.0" width="7" height="0.9" fill="#666" opacity="0.75"/></svg>
<div style="position:absolute;left:65px;top:96px;width:40px;height:40px;background:#f5f6fa;border-radius:5px"></div>
<svg style="position:absolute;left:65px;top:96px" width="40" height="40" viewBox="0 0 40 40"><rect x="3.5" y="8.5" width="34.5" height="16" rx="3" fill="#fff" stroke="#555" stroke-width="1.1"/><circle cx="10.855" cy="16.2" r="7.055" fill="#d0d0d0"/><circle cx="10.855" cy="13.972000000000001" r="2.8800000000000003" fill="#8a8a8a"/><path d="M5.611000000000001 23.5A5.244 6.071999999999999 0 0 1 16.099 23.5Z" fill="#8a8a8a"/><rect x="19.61" y="10.0" width="4.2" height="0.9" fill="#8a6a9a" opacity="0.75"/><rect x="19.61" y="13.0" width="5.6000000000000005" height="0.9" fill="#6a7a9a" opacity="0.75"/><rect x="19.61" y="16.0" width="3.5" height="0.9" fill="#666" opacity="0.75"/><rect x="19.61" y="21.0" width="7" height="0.9" fill="#666" opacity="0.75"/></svg>
<div style="position:absolute;left:113px;top:96px;width:40px;height:40px;background:#f5f6fa;border-radius:5px"></div>
<svg style="position:absolute;left:113px;top:96px" width="40" height="40" viewBox="0 0 40 40"><rect x="3.5" y="7.5" width="33.5" height="18.5" rx="0.8" fill="#fdf3e8" stroke="#c0392b" stroke-width="1.1"/><rect x="3.5" y="7.5" width="33.5" height="2.6" fill="#fff"/><path d="M3.5 10.1H37.0" stroke="#c0392b" stroke-width="0.8"/><rect x="4.3" y="10.9" width="12.73" height="14.3" fill="#d0d0d0"/><circle cx="10.665" cy="15.533999999999999" r="2.8600000000000003" fill="#8a8a8a"/><path d="M5.572999999999999 25.0A5.0920000000000005 6.033999999999999 0 0 1 15.757 25.0Z" fill="#8a8a8a"/><rect x="19.23" y="11.6" width="4.2" height="0.9" fill="#8a6a9a" opacity="0.75"/><rect x="19.23" y="14.6" width="5.6000000000000005" height="0.9" fill="#6a7a9a" opacity="0.75"/><rect x="19.23" y="17.6" width="3.5" height="0.9" fill="#666" opacity="0.75"/><rect x="19.23" y="22.6" width="7" height="0.9" fill="#666" opacity="0.75"/></svg>
<div style="position:absolute;left:161px;top:96px;width:40px;height:40px;background:#f5f6fa;border-radius:5px"></div>
<svg style="position:absolute;left:161px;top:96px" width="40" height="40" viewBox="0 0 40 40"><rect x="3.5" y="7.5" width="34" height="18.5" rx="0.8" fill="#fdf3e8" stroke="#c0392b" stroke-width="1.1"/><rect x="3.5" y="7.5" width="34" height="2.6" fill="#fff"/><path d="M3.5 10.1H37.5" stroke="#c0392b" stroke-width="0.8"/><circle cx="10.76" cy="17.75" r="6.96" fill="#d0d0d0"/><circle cx="10.76" cy="15.533999999999999" r="2.8600000000000003" fill="#8a8a8a"/><path d="M5.592 25.0A5.168 6.033999999999999 0 0 1 15.928 25.0Z" fill="#8a8a8a"/><rect x="19.42" y="11.6" width="4.2" height="0.9" fill="#8a6a9a" opacity="0.75"/><rect x="19.42" y="14.6" width="5.6000000000000005" height="0.9" fill="#6a7a9a" opacity="0.75"/><rect x="19.42" y="17.6" width="3.5" height="0.9" fill="#666" opacity="0.75"/><rect x="19.42" y="22.6" width="7" height="0.9" fill="#666" opacity="0.75"/></svg>
<div style="position:absolute;left:17px;top:144px;width:40px;height:40px;background:#f5f6fa;border-radius:5px"></div>
<svg style="position:absolute;left:17px;top:144px" width="40" height="40" viewBox="0 0 40 40"><rect x="4.5" y="11.5" width="33" height="18" rx="0.8" fill="#fff" stroke="#333" stroke-width="1.1"/><rect x="4.5" y="11.5" width="33" height="2.6" fill="#3a70d0"/><path d="M4.5 14.1H37.5" stroke="#333" stroke-width="0.8"/><rect x="5.3" y="14.9" width="12.540000000000001" height="13.8" fill="#d0d0d0"/><circle cx="11.57" cy="19.344" r="2.7600000000000002" fill="#8a8a8a"/><path d="M6.553999999999999 28.5A5.016000000000001 5.844000000000001 0 0 1 16.586000000000002 28.5Z" fill="#8a8a8a"/><rect x="20.04" y="15.6" width="4.2" height="0.9" fill="#8a6a9a" opacity="0.75"/><rect x="20.04" y="18.6" width="5.6000000000000005" height="0.9" fill="#6a7a9a" opacity="0.75"/><rect x="20.04" y="21.6" width="3.5" height="0.9" fill="#666" opacity="0.75"/><rect x="20.04" y="26.6" width="7" height="0.9" fill="#666" opacity="0.75"/></svg>
<div style="position:absolute;left:65px;top:144px;width:40px;height:40px;background:#f5f6fa;border-radius:5px"></div>
<svg style="position:absolute;left:65px;top:144px" width="40" height="40" viewBox="0 0 40 40"><rect x="3.5" y="11.5" width="34" height="18" rx="0.8" fill="#fff" stroke="#333" stroke-width="1.1"/><rect x="3.5" y="11.5" width="34" height="2.6" fill="#3a70d0"/><path d="M3.5 14.1H37.5" stroke="#333" stroke-width="0.8"/><circle cx="10.76" cy="21.5" r="6.96" fill="#d0d0d0"/><circle cx="10.76" cy="19.344" r="2.7600000000000002" fill="#8a8a8a"/><path d="M5.592 28.5A5.168 5.844000000000001 0 0 1 15.928 28.5Z" fill="#8a8a8a"/><rect x="19.42" y="15.6" width="4.2" height="0.9" fill="#8a6a9a" opacity="0.75"/><rect x="19.42" y="18.6" width="5.6000000000000005" height="0.9" fill="#6a7a9a" opacity="0.75"/><rect x="19.42" y="21.6" width="3.5" height="0.9" fill="#666" opacity="0.75"/><rect x="19.42" y="26.6" width="7" height="0.9" fill="#666" opacity="0.75"/></svg>
<div style="position:absolute;left:113px;top:144px;width:40px;height:40px;background:#f5f6fa;border-radius:5px"></div>
<svg style="position:absolute;left:113px;top:144px" width="40" height="40" viewBox="0 0 40 40"><rect x="3.5" y="13" width="34" height="15" rx="1.5" fill="#e6f0fb" stroke="#5b8bd0" stroke-width="1.1"/><rect x="7.5" y="14.8" width="4.8" height="0.9" fill="#8a6a9a" opacity="0.75"/><rect x="7.5" y="17.8" width="6.4" height="0.9" fill="#6a7a9a" opacity="0.75"/><rect x="7.5" y="20.8" width="4.0" height="0.9" fill="#666" opacity="0.75"/><rect x="7.5" y="25.8" width="8" height="0.9" fill="#666" opacity="0.75"/></svg>
<div style="position:absolute;left:161px;top:144px;width:40px;height:40px;background:#f5f6fa;border-radius:5px"></div>
<svg style="position:absolute;left:161px;top:144px" width="40" height="40" viewBox="0 0 40 40"><rect x="4.5" y="11.5" width="33.5" height="18" rx="0.8" fill="#eaf5ec" stroke="#3a9a5a" stroke-width="1.1"/><rect x="4.5" y="11.5" width="33.5" height="2.6" fill="#fff"/><path d="M4.5 14.1H38.0" stroke="#3a9a5a" stroke-width="0.8"/><rect x="8.5" y="15.9" width="4.8" height="0.9" fill="#8a6a9a" opacity="0.75"/><rect x="8.5" y="18.9" width="6.4" height="0.9" fill="#6a7a9a" opacity="0.75"/><rect x="8.5" y="21.9" width="4.0" height="0.9" fill="#666" opacity="0.75"/><rect x="8.5" y="26.9" width="8" height="0.9" fill="#666" opacity="0.75"/></svg>
<div style="position:absolute;left:17px;top:192px;width:40px;height:40px;background:#f5f6fa;border-radius:5px"></div>
<svg style="position:absolute;left:17px;top:192px" width="40" height="40" viewBox="0 0 40 40"><rect x="10" y="6.5" width="20" height="33" rx="1" fill="#fff" stroke="#333" stroke-width="1"/><rect x="13" y="9" width="14" height="12" fill="#d4d4d4"/><circle cx="20" cy="13" r="3.1" fill="#8a8a8a"/><path d="M14.5 21A5.5 4.5 0 0 1 25.5 21Z" fill="#8a8a8a"/><rect x="14" y="24" width="4.2" height="0.9" fill="#8a6a9a" opacity="0.75"/><rect x="14" y="27" width="5.6000000000000005" height="0.9" fill="#6a7a9a" opacity="0.75"/><rect x="14" y="30" width="3.5" height="0.9" fill="#666" opacity="0.75"/><rect x="14" y="35" width="7" height="0.9" fill="#666" opacity="0.75"/></svg>
<div style="position:absolute;left:65px;top:192px;width:40px;height:40px;background:#f5f6fa;border-radius:5px"></div>
<svg style="position:absolute;left:65px;top:192px" width="40" height="40" viewBox="0 0 40 40"><rect x="9.5" y="6.5" width="20" height="33" rx="1" fill="#fff" stroke="#333" stroke-width="1"/><circle cx="19.5" cy="14" r="6.8" fill="#d4d4d4"/><circle cx="19.5" cy="11.8" r="3" fill="#8a8a8a"/><path d="M14.5 19.5A5.0 4.5 0 0 1 24.5 19.5Z" fill="#8a8a8a"/><rect x="13.5" y="24" width="4.2" height="0.9" fill="#8a6a9a" opacity="0.75"/><rect x="13.5" y="27" width="5.6000000000000005" height="0.9" fill="#6a7a9a" opacity="0.75"/><rect x="13.5" y="30" width="3.5" height="0.9" fill="#666" opacity="0.75"/><rect x="13.5" y="35" width="7" height="0.9" fill="#666" opacity="0.75"/></svg>
<div style="position:absolute;left:113px;top:192px;width:40px;height:40px;background:#f5f6fa;border-radius:5px"></div>
<svg style="position:absolute;left:113px;top:192px" width="40" height="40" viewBox="0 0 40 40"><rect x="10" y="6.5" width="20" height="33" rx="3" fill="#fff" stroke="#333" stroke-width="1"/><rect x="13" y="9" width="14" height="12" fill="#d4d4d4"/><circle cx="20" cy="13" r="3.1" fill="#8a8a8a"/><path d="M14.5 21A5.5 4.5 0 0 1 25.5 21Z" fill="#8a8a8a"/><rect x="14" y="24" width="4.2" height="0.9" fill="#8a6a9a" opacity="0.75"/><rect x="14" y="27" width="5.6000000000000005" height="0.9" fill="#6a7a9a" opacity="0.75"/><rect x="14" y="30" width="3.5" height="0.9" fill="#666" opacity="0.75"/><rect x="14" y="35" width="7" height="0.9" fill="#666" opacity="0.75"/></svg>
<div style="position:absolute;left:161px;top:192px;width:40px;height:40px;background:#f5f6fa;border-radius:5px"></div>
<svg style="position:absolute;left:161px;top:192px" width="40" height="40" viewBox="0 0 40 40"><rect x="9.5" y="6.5" width="20" height="33" rx="3" fill="#fff" stroke="#333" stroke-width="1"/><circle cx="19.5" cy="14" r="6.8" fill="#d4d4d4"/><circle cx="19.5" cy="11.8" r="3" fill="#8a8a8a"/><path d="M14.5 19.5A5.0 4.5 0 0 1 24.5 19.5Z" fill="#8a8a8a"/><rect x="13.5" y="24" width="4.2" height="0.9" fill="#8a6a9a" opacity="0.75"/><rect x="13.5" y="27" width="5.6000000000000005" height="0.9" fill="#6a7a9a" opacity="0.75"/><rect x="13.5" y="30" width="3.5" height="0.9" fill="#666" opacity="0.75"/><rect x="13.5" y="35" width="7" height="0.9" fill="#666" opacity="0.75"/></svg>
<div style="position:absolute;left:17px;top:240px;width:40px;height:40px;background:#f5f6fa;border-radius:5px"></div>
<svg style="position:absolute;left:17px;top:240px" width="40" height="40" viewBox="0 0 40 40"><circle cx="20" cy="12" r="7" fill="#c8ecc0"/></svg>
<div style="position:absolute;left:65px;top:240px;width:40px;height:40px;background:#f5f6fa;border-radius:5px"></div>
<svg style="position:absolute;left:65px;top:240px" width="40" height="40" viewBox="0 0 40 40"></svg>
<div style="position:absolute;left:113px;top:240px;width:40px;height:40px;background:#f5f6fa;border-radius:5px"></div>
<svg style="position:absolute;left:113px;top:240px" width="40" height="40" viewBox="0 0 40 40"></svg>
<div style="position:absolute;left:161px;top:240px;width:40px;height:40px;background:#f5f6fa;border-radius:5px"></div>
<svg style="position:absolute;left:161px;top:240px" width="40" height="40" viewBox="0 0 40 40"><circle cx="16" cy="12" r="6" fill="#4a9a3a"/><circle cx="24" cy="12" r="6" fill="#4a9a3a"/></svg>
</div>
<div style="position:absolute;left:274px;top:132px;width:1010px;height:17px;background:#fbfbfc"></div>
<div style="position:absolute;left:274px;top:149px;width:17px;height:484px;background:#fbfbfc"></div>
<div style="position:absolute;left:274px;top:149px;width:1010px;height:1px;background:#e3e3e8"></div>
<div style="position:absolute;left:291px;top:132px;width:1px;height:501px;background:#e3e3e8"></div>
<div style="position:absolute;left:1284px;top:132px;width:1px;height:501px;background:#e3e3e8"></div>
<div style="position:absolute;left:274px;top:633px;width:1010px;height:1px;background:#e3e3e8"></div>
<svg style="position:absolute;left:0;top:0" width="1335" height="698"><rect x="295" y="144" width="1" height="5" fill="#e3e3e8"/><rect x="304" y="144" width="1" height="5" fill="#e3e3e8"/><rect x="313" y="132" width="1" height="17" fill="#e3e3e8"/><rect x="321" y="144" width="1" height="5" fill="#e3e3e8"/><rect x="330" y="144" width="1" height="5" fill="#e3e3e8"/><rect x="339" y="144" width="1" height="5" fill="#e3e3e8"/><rect x="347" y="144" width="1" height="5" fill="#e3e3e8"/><rect x="356" y="132" width="1" height="17" fill="#e3e3e8"/><rect x="365" y="144" width="1" height="5" fill="#e3e3e8"/><rect x="373" y="144" width="1" height="5" fill="#e3e3e8"/><rect x="382" y="144" width="1" height="5" fill="#e3e3e8"/><rect x="391" y="144" width="1" height="5" fill="#e3e3e8"/><rect x="399" y="132" width="1" height="17" fill="#e3e3e8"/><rect x="408" y="144" width="1" height="5" fill="#e3e3e8"/><rect x="417" y="144" width="1" height="5" fill="#e3e3e8"/><rect x="426" y="144" width="1" height="5" fill="#e3e3e8"/><rect x="434" y="144" width="1" height="5" fill="#e3e3e8"/><rect x="443" y="132" width="1" height="17" fill="#e3e3e8"/><rect x="452" y="144" width="1" height="5" fill="#e3e3e8"/><rect x="460" y="144" width="1" height="5" fill="#e3e3e8"/><rect x="469" y="144" width="1" height="5" fill="#e3e3e8"/><rect x="478" y="144" width="1" height="5" fill="#e3e3e8"/><rect x="486" y="132" width="1" height="17" fill="#e3e3e8"/><rect x="495" y="144" width="1" height="5" fill="#e3e3e8"/><rect x="504" y="144" width="1" height="5" fill="#e3e3e8"/><rect x="513" y="144" width="1" height="5" fill="#e3e3e8"/><rect x="521" y="144" width="1" height="5" fill="#e3e3e8"/><rect x="530" y="132" width="1" height="17" fill="#e3e3e8"/><rect x="539" y="144" width="1" height="5" fill="#e3e3e8"/><rect x="547" y="144" width="1" height="5" fill="#e3e3e8"/><rect x="556" y="144" width="1" height="5" fill="#e3e3e8"/><rect x="565" y="144" width="1" height="5" fill="#e3e3e8"/><rect x="573" y="132" width="1" height="17" fill="#e3e3e8"/><rect x="582" y="144" width="1" height="5" fill="#e3e3e8"/><rect x="591" y="144" width="1" height="5" fill="#e3e3e8"/><rect x="600" y="144" width="1" height="5" fill="#e3e3e8"/><rect x="608" y="144" width="1" height="5" fill="#e3e3e8"/><rect x="617" y="132" width="1" height="17" fill="#e3e3e8"/><rect x="626" y="144" width="1" height="5" fill="#e3e3e8"/><rect x="634" y="144" width="1" height="5" fill="#e3e3e8"/><rect x="643" y="144" width="1" height="5" fill="#e3e3e8"/><rect x="652" y="144" width="1" height="5" fill="#e3e3e8"/><rect x="660" y="132" width="1" height="17" fill="#e3e3e8"/><rect x="669" y="144" width="1" height="5" fill="#e3e3e8"/><rect x="678" y="144" width="1" height="5" fill="#e3e3e8"/><rect x="687" y="144" width="1" height="5" fill="#e3e3e8"/><rect x="695" y="144" width="1" height="5" fill="#e3e3e8"/><rect x="704" y="132" width="1" height="17" fill="#e3e3e8"/><rect x="713" y="144" width="1" height="5" fill="#e3e3e8"/><rect x="721" y="144" width="1" height="5" fill="#e3e3e8"/><rect x="730" y="144" width="1" height="5" fill="#e3e3e8"/><rect x="739" y="144" width="1" height="5" fill="#e3e3e8"/><rect x="747" y="132" width="1" height="17" fill="#e3e3e8"/><rect x="756" y="144" width="1" height="5" fill="#e3e3e8"/><rect x="765" y="144" width="1" height="5" fill="#e3e3e8"/><rect x="774" y="144" width="1" height="5" fill="#e3e3e8"/><rect x="782" y="144" width="1" height="5" fill="#e3e3e8"/><rect x="791" y="132" width="1" height="17" fill="#e3e3e8"/><rect x="800" y="144" width="1" height="5" fill="#e3e3e8"/><rect x="808" y="144" width="1" height="5" fill="#e3e3e8"/><rect x="817" y="144" width="1" height="5" fill="#e3e3e8"/><rect x="826" y="144" width="1" height="5" fill="#e3e3e8"/><rect x="834" y="132" width="1" height="17" fill="#e3e3e8"/><rect x="843" y="144" width="1" height="5" fill="#e3e3e8"/><rect x="852" y="144" width="1" height="5" fill="#e3e3e8"/><rect x="860" y="144" width="1" height="5" fill="#e3e3e8"/><rect x="869" y="144" width="1" height="5" fill="#e3e3e8"/><rect x="878" y="132" width="1" height="17" fill="#e3e3e8"/><rect x="887" y="144" width="1" height="5" fill="#e3e3e8"/><rect x="895" y="144" width="1" height="5" fill="#e3e3e8"/><rect x="904" y="144" width="1" height="5" fill="#e3e3e8"/><rect x="913" y="144" width="1" height="5" fill="#e3e3e8"/><rect x="921" y="132" width="1" height="17" fill="#e3e3e8"/><rect x="930" y="144" width="1" height="5" fill="#e3e3e8"/><rect x="939" y="144" width="1" height="5" fill="#e3e3e8"/><rect x="947" y="144" width="1" height="5" fill="#e3e3e8"/><rect x="956" y="144" width="1" height="5" fill="#e3e3e8"/><rect x="965" y="132" width="1" height="17" fill="#e3e3e8"/><rect x="974" y="144" width="1" height="5" fill="#e3e3e8"/><rect x="982" y="144" width="1" height="5" fill="#e3e3e8"/><rect x="991" y="144" width="1" height="5" fill="#e3e3e8"/><rect x="1000" y="144" width="1" height="5" fill="#e3e3e8"/><rect x="1008" y="132" width="1" height="17" fill="#e3e3e8"/><rect x="1017" y="144" width="1" height="5" fill="#e3e3e8"/><rect x="1026" y="144" width="1" height="5" fill="#e3e3e8"/><rect x="1034" y="144" width="1" height="5" fill="#e3e3e8"/><rect x="1043" y="144" width="1" height="5" fill="#e3e3e8"/><rect x="1052" y="132" width="1" height="17" fill="#e3e3e8"/><rect x="1061" y="144" width="1" height="5" fill="#e3e3e8"/><rect x="1069" y="144" width="1" height="5" fill="#e3e3e8"/><rect x="1078" y="144" width="1" height="5" fill="#e3e3e8"/><rect x="1087" y="144" width="1" height="5" fill="#e3e3e8"/><rect x="1095" y="132" width="1" height="17" fill="#e3e3e8"/><rect x="1104" y="144" width="1" height="5" fill="#e3e3e8"/><rect x="1113" y="144" width="1" height="5" fill="#e3e3e8"/><rect x="1121" y="144" width="1" height="5" fill="#e3e3e8"/><rect x="1130" y="144" width="1" height="5" fill="#e3e3e8"/><rect x="1139" y="132" width="1" height="17" fill="#e3e3e8"/><rect x="1148" y="144" width="1" height="5" fill="#e3e3e8"/><rect x="1156" y="144" width="1" height="5" fill="#e3e3e8"/><rect x="1165" y="144" width="1" height="5" fill="#e3e3e8"/><rect x="1174" y="144" width="1" height="5" fill="#e3e3e8"/><rect x="1182" y="132" width="1" height="17" fill="#e3e3e8"/><rect x="1191" y="144" width="1" height="5" fill="#e3e3e8"/><rect x="1200" y="144" width="1" height="5" fill="#e3e3e8"/><rect x="1208" y="144" width="1" height="5" fill="#e3e3e8"/><rect x="1217" y="144" width="1" height="5" fill="#e3e3e8"/><rect x="1226" y="132" width="1" height="17" fill="#e3e3e8"/><rect x="1235" y="144" width="1" height="5" fill="#e3e3e8"/><rect x="1243" y="144" width="1" height="5" fill="#e3e3e8"/><rect x="1252" y="144" width="1" height="5" fill="#e3e3e8"/><rect x="1261" y="144" width="1" height="5" fill="#e3e3e8"/><rect x="1269" y="132" width="1" height="17" fill="#e3e3e8"/><rect x="1278" y="144" width="1" height="5" fill="#e3e3e8"/><rect x="286" y="158" width="5" height="1" fill="#e3e3e8"/><rect x="286" y="167" width="5" height="1" fill="#e3e3e8"/><rect x="286" y="176" width="5" height="1" fill="#e3e3e8"/><rect x="286" y="184" width="5" height="1" fill="#e3e3e8"/><rect x="274" y="193" width="17" height="1" fill="#e3e3e8"/><rect x="286" y="202" width="5" height="1" fill="#e3e3e8"/><rect x="286" y="210" width="5" height="1" fill="#e3e3e8"/><rect x="286" y="219" width="5" height="1" fill="#e3e3e8"/><rect x="286" y="228" width="5" height="1" fill="#e3e3e8"/><rect x="274" y="236" width="17" height="1" fill="#e3e3e8"/><rect x="286" y="245" width="5" height="1" fill="#e3e3e8"/><rect x="286" y="254" width="5" height="1" fill="#e3e3e8"/><rect x="286" y="263" width="5" height="1" fill="#e3e3e8"/><rect x="286" y="271" width="5" height="1" fill="#e3e3e8"/><rect x="274" y="280" width="17" height="1" fill="#e3e3e8"/><rect x="286" y="289" width="5" height="1" fill="#e3e3e8"/><rect x="286" y="297" width="5" height="1" fill="#e3e3e8"/><rect x="286" y="306" width="5" height="1" fill="#e3e3e8"/><rect x="286" y="315" width="5" height="1" fill="#e3e3e8"/><rect x="274" y="323" width="17" height="1" fill="#e3e3e8"/><rect x="286" y="332" width="5" height="1" fill="#e3e3e8"/><rect x="286" y="341" width="5" height="1" fill="#e3e3e8"/><rect x="286" y="350" width="5" height="1" fill="#e3e3e8"/><rect x="286" y="358" width="5" height="1" fill="#e3e3e8"/><rect x="274" y="367" width="17" height="1" fill="#e3e3e8"/><rect x="286" y="376" width="5" height="1" fill="#e3e3e8"/><rect x="286" y="384" width="5" height="1" fill="#e3e3e8"/><rect x="286" y="393" width="5" height="1" fill="#e3e3e8"/><rect x="286" y="402" width="5" height="1" fill="#e3e3e8"/><rect x="274" y="410" width="17" height="1" fill="#e3e3e8"/><rect x="286" y="419" width="5" height="1" fill="#e3e3e8"/><rect x="286" y="428" width="5" height="1" fill="#e3e3e8"/><rect x="286" y="437" width="5" height="1" fill="#e3e3e8"/><rect x="286" y="445" width="5" height="1" fill="#e3e3e8"/><rect x="274" y="454" width="17" height="1" fill="#e3e3e8"/><rect x="286" y="463" width="5" height="1" fill="#e3e3e8"/><rect x="286" y="471" width="5" height="1" fill="#e3e3e8"/><rect x="286" y="480" width="5" height="1" fill="#e3e3e8"/><rect x="286" y="489" width="5" height="1" fill="#e3e3e8"/><rect x="274" y="497" width="17" height="1" fill="#e3e3e8"/><rect x="286" y="506" width="5" height="1" fill="#e3e3e8"/><rect x="286" y="515" width="5" height="1" fill="#e3e3e8"/><rect x="286" y="524" width="5" height="1" fill="#e3e3e8"/><rect x="286" y="532" width="5" height="1" fill="#e3e3e8"/><rect x="274" y="541" width="17" height="1" fill="#e3e3e8"/><rect x="286" y="550" width="5" height="1" fill="#e3e3e8"/><rect x="286" y="558" width="5" height="1" fill="#e3e3e8"/><rect x="286" y="567" width="5" height="1" fill="#e3e3e8"/><rect x="286" y="576" width="5" height="1" fill="#e3e3e8"/><rect x="274" y="584" width="17" height="1" fill="#e3e3e8"/><rect x="286" y="593" width="5" height="1" fill="#e3e3e8"/><rect x="286" y="602" width="5" height="1" fill="#e3e3e8"/><rect x="286" y="610" width="5" height="1" fill="#e3e3e8"/><rect x="286" y="619" width="5" height="1" fill="#e3e3e8"/><rect x="274" y="628" width="17" height="1" fill="#e3e3e8"/></svg>
<div style="position:absolute;left:292px;top:132px;width:992px;height:17px;overflow:hidden">
<div class="t" style="left:22.5px;top:2px;font-size:11px;line-height:13px;color:#666">-120</div>
<div class="t" style="left:66.0px;top:2px;font-size:11px;line-height:13px;color:#666">-110</div>
<div class="t" style="left:109.5px;top:2px;font-size:11px;line-height:13px;color:#666">-100</div>
<div class="t" style="left:153.0px;top:2px;font-size:11px;line-height:13px;color:#666">-90</div>
<div class="t" style="left:196.5px;top:2px;font-size:11px;line-height:13px;color:#666">-80</div>
<div class="t" style="left:240.0px;top:2px;font-size:11px;line-height:13px;color:#666">-70</div>
<div class="t" style="left:283.5px;top:2px;font-size:11px;line-height:13px;color:#666">-60</div>
<div class="t" style="left:326.9px;top:2px;font-size:11px;line-height:13px;color:#666">-50</div>
<div class="t" style="left:370.4px;top:2px;font-size:11px;line-height:13px;color:#666">-40</div>
<div class="t" style="left:413.9px;top:2px;font-size:11px;line-height:13px;color:#666">-30</div>
<div class="t" style="left:457.4px;top:2px;font-size:11px;line-height:13px;color:#666">-20</div>
<div class="t" style="left:500.9px;top:2px;font-size:11px;line-height:13px;color:#666">-10</div>
<div class="t" style="left:544.4px;top:2px;font-size:11px;line-height:13px;color:#666">0</div>
<div class="t" style="left:587.9px;top:2px;font-size:11px;line-height:13px;color:#666">10</div>
<div class="t" style="left:631.4px;top:2px;font-size:11px;line-height:13px;color:#666">20</div>
<div class="t" style="left:674.9px;top:2px;font-size:11px;line-height:13px;color:#666">30</div>
<div class="t" style="left:718.4px;top:2px;font-size:11px;line-height:13px;color:#666">40</div>
<div class="t" style="left:761.8px;top:2px;font-size:11px;line-height:13px;color:#666">50</div>
<div class="t" style="left:805.3px;top:2px;font-size:11px;line-height:13px;color:#666">60</div>
<div class="t" style="left:848.8px;top:2px;font-size:11px;line-height:13px;color:#666">70</div>
<div class="t" style="left:892.3px;top:2px;font-size:11px;line-height:13px;color:#666">80</div>
<div class="t" style="left:935.8px;top:2px;font-size:11px;line-height:13px;color:#666">90</div>
<div class="t" style="left:979.3px;top:2px;font-size:11px;line-height:13px;color:#666">100</div>
</div>
<svg style="position:absolute;left:0;top:0" width="1335" height="698"><defs><clipPath id="lr"><rect x="274" y="150" width="17" height="483"/></clipPath></defs><g clip-path="url(#lr)"><text transform="translate(285.5 151.5) rotate(-90)" text-anchor="end" font-size="11" fill="#666" font-family="Liberation Sans, sans-serif">0</text><text transform="translate(285.5 195.0) rotate(-90)" text-anchor="end" font-size="11" fill="#666" font-family="Liberation Sans, sans-serif">10</text><text transform="translate(285.5 238.5) rotate(-90)" text-anchor="end" font-size="11" fill="#666" font-family="Liberation Sans, sans-serif">20</text><text transform="translate(285.5 282.0) rotate(-90)" text-anchor="end" font-size="11" fill="#666" font-family="Liberation Sans, sans-serif">30</text><text transform="translate(285.5 325.5) rotate(-90)" text-anchor="end" font-size="11" fill="#666" font-family="Liberation Sans, sans-serif">40</text><text transform="translate(285.5 369.0) rotate(-90)" text-anchor="end" font-size="11" fill="#666" font-family="Liberation Sans, sans-serif">50</text><text transform="translate(285.5 412.4) rotate(-90)" text-anchor="end" font-size="11" fill="#666" font-family="Liberation Sans, sans-serif">60</text><text transform="translate(285.5 455.9) rotate(-90)" text-anchor="end" font-size="11" fill="#666" font-family="Liberation Sans, sans-serif">70</text><text transform="translate(285.5 499.4) rotate(-90)" text-anchor="end" font-size="11" fill="#666" font-family="Liberation Sans, sans-serif">80</text><text transform="translate(285.5 542.9) rotate(-90)" text-anchor="end" font-size="11" fill="#666" font-family="Liberation Sans, sans-serif">90</text><text transform="translate(285.5 586.4) rotate(-90)" text-anchor="end" font-size="11" fill="#666" font-family="Liberation Sans, sans-serif">100</text><text transform="translate(285.5 629.9) rotate(-90)" text-anchor="end" font-size="11" fill="#666" font-family="Liberation Sans, sans-serif">110</text></g></svg>
<div style="position:absolute;left:292px;top:193px;width:992px;height:1px;background:#e2e2e6"></div>
<svg style="position:absolute;left:834px;top:150px" width="1" height="483"><line x1="0.5" y1="0" x2="0.5" y2="483" stroke="#999" stroke-width="1" stroke-dasharray="5 4"/></svg>
<svg style="position:absolute;left:0;top:0" width="1335" height="698"><circle cx="596" cy="241" r="63.5" fill="#fff" stroke="#1c2458" stroke-width="1"/><circle cx="596" cy="241" r="57.8" fill="#d6d6d6"/><circle cx="596" cy="218.8" r="21" fill="#868686"/><path d="M555.4 278A40.6 36.2 0 0 1 636.6 278Z" fill="#868686"/><circle cx="828" cy="241" r="63.5" fill="#fff" stroke="#1c2458" stroke-width="1"/><circle cx="828" cy="241" r="57.8" fill="#d6d6d6"/><circle cx="828" cy="218.8" r="21" fill="#868686"/><path d="M787.4 278A40.6 36.2 0 0 1 868.6 278Z" fill="#868686"/><circle cx="1096" cy="241" r="63.5" fill="#fff" stroke="#1c2458" stroke-width="1"/><circle cx="1096" cy="241" r="57.8" fill="#d6d6d6"/><circle cx="1096" cy="218.8" r="21" fill="#868686"/><path d="M1055.4 278A40.6 36.2 0 0 1 1136.6 278Z" fill="#868686"/><circle cx="364.5" cy="504" r="63.5" fill="#fff" stroke="#1c2458" stroke-width="1"/><circle cx="364.5" cy="504" r="57.8" fill="#d6d6d6"/><circle cx="364.5" cy="481.8" r="21" fill="#868686"/><path d="M323.9 541A40.6 36.2 0 0 1 405.1 541Z" fill="#868686"/><circle cx="596" cy="504" r="63.5" fill="#fff" stroke="#1c2458" stroke-width="1"/><circle cx="596" cy="504" r="57.8" fill="#d6d6d6"/><circle cx="596" cy="481.8" r="21" fill="#868686"/><path d="M555.4 541A40.6 36.2 0 0 1 636.6 541Z" fill="#868686"/><circle cx="828" cy="504" r="63.5" fill="#fff" stroke="#1c2458" stroke-width="1"/><circle cx="828" cy="504" r="57.8" fill="#d6d6d6"/><circle cx="828" cy="481.8" r="21" fill="#868686"/><path d="M787.4 541A40.6 36.2 0 0 1 868.6 541Z" fill="#868686"/><circle cx="1096" cy="504" r="63.5" fill="#fff" stroke="#1c2458" stroke-width="1"/><circle cx="1096" cy="504" r="57.8" fill="#d6d6d6"/><circle cx="1096" cy="481.8" r="21" fill="#868686"/><path d="M1055.4 541A40.6 36.2 0 0 1 1136.6 541Z" fill="#868686"/></svg>
<div style="position:absolute;left:1285px;top:132px;width:14px;height:501px;background:#fcfcfd"></div>
<div style="position:absolute;left:1287px;top:218px;width:10px;height:173px;background:#d1d2d5;border-radius:5px"></div>
<div style="position:absolute;left:274px;top:634px;width:1025px;height:14px;background:#fcfcfd"></div>
<div style="position:absolute;left:593px;top:636px;width:334px;height:10px;background:#d1d2d5;border-radius:5px"></div>
<div style="position:absolute;left:274px;top:648px;width:1025px;height:1px;background:#e3e3e8"></div>
<svg style="position:absolute;left:0;top:0" width="1335" height="698"><rect x="309.00" y="650" width="8.7" height="14" rx="2.2" fill="#b01424"/><rect x="319.88" y="650" width="8.7" height="14" rx="2.2" fill="#c8102e"/><rect x="330.77" y="650" width="8.7" height="14" rx="2.2" fill="#e03c5a"/><rect x="341.65" y="650" width="8.7" height="14" rx="2.2" fill="#f06080"/><rect x="352.54" y="650" width="8.7" height="14" rx="2.2" fill="#f8a0b0"/><rect x="363.43" y="650" width="8.7" height="14" rx="2.2" fill="#2a7a8c"/><rect x="374.31" y="650" width="8.7" height="14" rx="2.2" fill="#36a0bc"/><rect x="385.19" y="650" width="8.7" height="14" rx="2.2" fill="#3cbcd8"/><rect x="396.08" y="650" width="8.7" height="14" rx="2.2" fill="#5cd4ec"/><rect x="406.97" y="650" width="8.7" height="14" rx="2.2" fill="#a0ecfc"/><rect x="417.85" y="650" width="8.7" height="14" rx="2.2" fill="#f04c24"/><rect x="428.74" y="650" width="8.7" height="14" rx="2.2" fill="#fc7834"/><rect x="439.62" y="650" width="8.7" height="14" rx="2.2" fill="#fc901c"/><rect x="450.50" y="650" width="8.7" height="14" rx="2.2" fill="#fcb414"/><rect x="461.39" y="650" width="8.7" height="14" rx="2.2" fill="#fcc060"/><rect x="472.27" y="650" width="8.7" height="14" rx="2.2" fill="#148c74"/><rect x="483.16" y="650" width="8.7" height="14" rx="2.2" fill="#18b094"/><rect x="494.04" y="650" width="8.7" height="14" rx="2.2" fill="#1cc4a4"/><rect x="504.93" y="650" width="8.7" height="14" rx="2.2" fill="#68d4c4"/><rect x="515.82" y="650" width="8.7" height="14" rx="2.2" fill="#88e8dc"/><rect x="526.70" y="650" width="8.7" height="14" rx="2.2" fill="#982c60"/><rect x="537.59" y="650" width="8.7" height="14" rx="2.2" fill="#c04888"/><rect x="548.47" y="650" width="8.7" height="14" rx="2.2" fill="#e060a0"/><rect x="559.36" y="650" width="8.7" height="14" rx="2.2" fill="#fc88c8"/><rect x="570.24" y="650" width="8.7" height="14" rx="2.2" fill="#f4c4dc"/><rect x="581.12" y="650" width="8.7" height="14" rx="2.2" fill="#5c8c1c"/><rect x="592.01" y="650" width="8.7" height="14" rx="2.2" fill="#74a02c"/><rect x="602.89" y="650" width="8.7" height="14" rx="2.2" fill="#9cbc24"/><rect x="613.78" y="650" width="8.7" height="14" rx="2.2" fill="#b4d04c"/><rect x="624.66" y="650" width="8.7" height="14" rx="2.2" fill="#d0e090"/><rect x="635.55" y="650" width="8.7" height="14" rx="2.2" fill="#2024b0"/><rect x="646.43" y="650" width="8.7" height="14" rx="2.2" fill="#3048d8"/><rect x="657.32" y="650" width="8.7" height="14" rx="2.2" fill="#7040f0"/><rect x="668.20" y="650" width="8.7" height="14" rx="2.2" fill="#9070f8"/><rect x="679.09" y="650" width="8.7" height="14" rx="2.2" fill="#a890f8"/><rect x="689.97" y="650" width="8.7" height="14" rx="2.2" fill="#fcc800"/><rect x="700.86" y="650" width="8.7" height="14" rx="2.2" fill="#fcdc30"/><rect x="711.75" y="650" width="8.7" height="14" rx="2.2" fill="#f0e428"/><rect x="722.63" y="650" width="8.7" height="14" rx="2.2" fill="#f8f040"/><rect x="733.51" y="650" width="8.7" height="14" rx="2.2" fill="#fcfc80"/><rect x="744.40" y="650" width="8.7" height="14" rx="2.2" fill="#9850e0"/><rect x="755.28" y="650" width="8.7" height="14" rx="2.2" fill="#c050e8"/><rect x="766.17" y="650" width="8.7" height="14" rx="2.2" fill="#d070f4"/><rect x="777.06" y="650" width="8.7" height="14" rx="2.2" fill="#b888fc"/><rect x="787.94" y="650" width="8.7" height="14" rx="2.2" fill="#dca8fc"/><rect x="798.83" y="650" width="8.7" height="14" rx="2.2" fill="#2c7c44"/><rect x="809.71" y="650" width="8.7" height="14" rx="2.2" fill="#3c9c54"/><rect x="820.60" y="650" width="8.7" height="14" rx="2.2" fill="#50ac74"/><rect x="831.48" y="650" width="8.7" height="14" rx="2.2" fill="#68bc88"/><rect x="842.37" y="650" width="8.7" height="14" rx="2.2" fill="#90d4a8"/><rect x="853.25" y="650" width="8.7" height="14" rx="2.2" fill="#e03828"/><rect x="864.13" y="650" width="8.7" height="14" rx="2.2" fill="#fc4838"/><rect x="875.02" y="650" width="8.7" height="14" rx="2.2" fill="#f86060"/><rect x="885.90" y="650" width="8.7" height="14" rx="2.2" fill="#fc7070"/><rect x="896.79" y="650" width="8.7" height="14" rx="2.2" fill="#fc9080"/><rect x="907.67" y="650" width="8.7" height="14" rx="2.2" fill="#2040a0"/><rect x="918.56" y="650" width="8.7" height="14" rx="2.2" fill="#3050d0"/><rect x="929.44" y="650" width="8.7" height="14" rx="2.2" fill="#3068f0"/><rect x="940.33" y="650" width="8.7" height="14" rx="2.2" fill="#6088fc"/><rect x="951.22" y="650" width="8.7" height="14" rx="2.2" fill="#88b0f4"/><rect x="962.10" y="650" width="8.7" height="14" rx="2.2" fill="#702800"/><rect x="972.99" y="650" width="8.7" height="14" rx="2.2" fill="#983800"/><rect x="983.87" y="650" width="8.7" height="14" rx="2.2" fill="#a84428"/><rect x="994.75" y="650" width="8.7" height="14" rx="2.2" fill="#d06040"/><rect x="1005.64" y="650" width="8.7" height="14" rx="2.2" fill="#e07858"/><rect x="1016.52" y="650" width="8.7" height="14" rx="2.2" fill="#1888d8"/><rect x="1027.41" y="650" width="8.7" height="14" rx="2.2" fill="#2898f0"/><rect x="1038.30" y="650" width="8.7" height="14" rx="2.2" fill="#48b0fc"/><rect x="1049.18" y="650" width="8.7" height="14" rx="2.2" fill="#38ccfc"/><rect x="1060.07" y="650" width="8.7" height="14" rx="2.2" fill="#60dcfc"/><rect x="1070.95" y="650" width="8.7" height="14" rx="2.2" fill="#784830"/><rect x="1081.84" y="650" width="8.7" height="14" rx="2.2" fill="#905c40"/><rect x="1092.72" y="650" width="8.7" height="14" rx="2.2" fill="#b07050"/><rect x="1103.61" y="650" width="8.7" height="14" rx="2.2" fill="#d08860"/><rect x="1114.49" y="650" width="8.7" height="14" rx="2.2" fill="#f89870"/><rect x="1125.38" y="650" width="8.7" height="14" rx="2.2" fill="#888070"/><rect x="1136.26" y="650" width="8.7" height="14" rx="2.2" fill="#b0a898"/><rect x="1147.14" y="650" width="8.7" height="14" rx="2.2" fill="#ccc8b8"/><rect x="1158.03" y="650" width="8.7" height="14" rx="2.2" fill="#e4dccc"/><rect x="1168.91" y="650" width="8.7" height="14" rx="2.2" fill="#f4f0e0"/><rect x="1179.80" y="650" width="8.7" height="14" rx="2.2" fill="#1c1c1c"/><rect x="1190.68" y="650" width="8.7" height="14" rx="2.2" fill="#303030"/><rect x="1201.57" y="650" width="8.7" height="14" rx="2.2" fill="#444444"/><rect x="1212.45" y="650" width="8.7" height="14" rx="2.2" fill="#5c5c5c"/><rect x="1223.34" y="650" width="8.7" height="14" rx="2.2" fill="#7c7c7c"/><rect x="1234.22" y="650" width="8.7" height="14" rx="2.2" fill="#b0b0b0"/><rect x="1245.11" y="650" width="8.7" height="14" rx="2.2" fill="#c8c8c8"/><rect x="1255.99" y="650" width="8.7" height="14" rx="2.2" fill="#d8d8d8"/><rect x="1266.88" y="650" width="8.7" height="14" rx="2.2" fill="#e4e4e4"/><rect x="1277.76" y="650" width="8.7" height="14" rx="2.2" fill="#f0f0f0"/><rect x="1288.65" y="650" width="8.7" height="14" rx="2.2" fill="#fafafa"/></svg>
<svg style="position:absolute;left:285px;top:650px" width="13" height="14" viewBox="0 0 13 14" fill="none"><path d="M3.5 1L10 7.5L6 11.5L1 6.5L5 2.5" stroke="#333" stroke-width="1.6" stroke-linejoin="round"/><path d="M1.5 7H9.5L6 11Z" fill="#333"/><circle cx="11" cy="11.5" r="1.2" fill="#333"/></svg>
<svg style="position:absolute;left:299.0px;top:654.0px" width="5" height="3" viewBox="0 0 5 3" fill="none"><path d="M0 0H5L2.5 3Z" fill="#666"/></svg>
<div style="position:absolute;left:1179px;top:577px;width:88px;height:40px;border-radius:20px;background:#fff;box-shadow:0 2px 8px rgba(0,0,0,0.10)"></div>
<div style="position:absolute;left:1223px;top:585px;width:1px;height:24px;background:#e6e6ea"></div>
<svg style="position:absolute;left:1192px;top:586px" width="22" height="22" viewBox="0 0 22 22"><defs><linearGradient id="gw" x1="0" y1="0" x2="1" y2="1"><stop offset="0" stop-color="#8a4dff"/><stop offset="1" stop-color="#5a55ff"/></linearGradient></defs>
<rect x="7.2" y="1.5" width="4.2" height="19" rx="1.4" transform="rotate(-33 9.3 11)" stroke="url(#gw)" stroke-width="1.8" fill="none"/>
<path d="M4.2 9.6L10.5 6" stroke="#8a4dff" stroke-width="1.4"/>
<path d="M4 12.4Q4.5 14.5 6.6 15Q4.5 15.5 4 17.6Q3.5 15.5 1.4 15Q3.5 14.5 4 12.4Z" fill="#8a4dff"/>
<path d="M12.5 0.20000000000000018Q12.9 1.8000000000000003 14.5 2.2Q12.9 2.6 12.5 4.2Q12.1 2.6 10.5 2.2Q12.1 1.8000000000000003 12.5 0.20000000000000018Z" fill="#6a55ff"/>
<path d="M17.5 4.3Q18.1 6.9 20.7 7.5Q18.1 8.1 17.5 10.7Q16.9 8.1 14.3 7.5Q16.9 6.9 17.5 4.3Z" fill="#3a7bff"/></svg>
<svg style="position:absolute;left:1234px;top:587px" width="21" height="21" viewBox="0 0 21 21"><defs><linearGradient id="gs" x1="0" y1="1" x2="1" y2="0"><stop offset="0" stop-color="#8a3dff"/><stop offset="1" stop-color="#3a6bff"/></linearGradient></defs>
<path d="M9 3.3000000000000007Q10.6 9.9 17.2 11.5Q10.6 13.1 9 19.7Q7.4 13.1 0.8000000000000007 11.5Q7.4 9.9 9 3.3000000000000007Z" fill="url(#gs)"/>
<path d="M16.8 0.7000000000000002Q17.400000000000002 3.4 20.1 4Q17.400000000000002 4.6 16.8 7.3Q16.2 4.6 13.5 4Q16.2 3.4 16.8 0.7000000000000002Z" fill="#3a7bff"/></svg>
<div style="position:absolute;left:1299px;top:132px;width:1px;height:533px;background:#e8e8ec"></div>
<svg style="position:absolute;left:1311px;top:142px" width="14" height="12" viewBox="0 0 14 12" fill="none"><path d="M6.5 1L1.5 6L6.5 11M12.5 1L7.5 6L12.5 11" stroke="#333" stroke-width="1.9" stroke-linecap="round" stroke-linejoin="round"/></svg>
<div style="position:absolute;left:1300px;top:164px;width:33px;height:35px;background:#0a7cff"></div>
<svg style="position:absolute;left:1309px;top:171px" width="19" height="20" viewBox="0 0 19 20" fill="none"><path d="M8 3L16.6 10.8L8.6 18.6L1.2 11.2Z" stroke="#fff" stroke-width="2" stroke-linejoin="round"/><path d="M6.5 0.8L8.6 3.2" stroke="#fff" stroke-width="2" stroke-linecap="round"/><path d="M1.5 11.2C6 9.5 11 9.5 16.3 10.8L8.6 18.4Z" fill="#fff"/><circle cx="17" cy="17.5" r="1.4" fill="#fff"/></svg>
<svg style="position:absolute;left:1310px;top:218px" width="16" height="17" viewBox="0 0 16 17" fill="none"><path d="M1 1H10.5L15 5.5V16H1Z" stroke="#333" stroke-width="1.7" stroke-linejoin="round"/><path d="M4 7H5M7 7H12M4 10H5M7 10H12M4 13H5M7 13H12" stroke="#333" stroke-width="1.5"/></svg>
<svg style="position:absolute;left:1310px;top:262px" width="17" height="17" viewBox="0 0 17 17" fill="none"><circle cx="8.5" cy="8.5" r="7.6" stroke="#333" stroke-width="1.6"/><path d="M6 6.3A2.5 2.5 0 1 1 8.5 8.8V10.2" stroke="#333" stroke-width="1.7" stroke-linecap="round"/><circle cx="8.5" cy="12.6" r="1" fill="#333"/></svg>
<svg style="position:absolute;left:1309px;top:640px" width="18" height="18" viewBox="0 0 14 14" fill="none"><path d="M4.65 2.70 L5.48 0.78 L8.52 0.78 L9.35 2.70 L9.55 2.82 L11.62 2.57 L13.14 5.21 L11.90 6.88 L11.90 7.12 L13.14 8.79 L11.62 11.43 L9.55 11.18 L9.35 11.30 L8.52 13.22 L5.48 13.22 L4.65 11.30 L4.45 11.18 L2.38 11.43 L0.86 8.79 L2.10 7.12 L2.10 6.88 L0.86 5.21 L2.38 2.57 L4.45 2.82Z" stroke="#333" stroke-width="1.3" stroke-linejoin="round"/><circle cx="7" cy="7" r="2.1" stroke="#333" stroke-width="1.3"/></svg>
<div style="position:absolute;left:2px;top:665px;width:1331px;height:31px;background:#f1f2f6;border-radius:0 0 6px 6px"></div>
<svg style="position:absolute;left:20px;top:676px" width="17" height="11" viewBox="0 0 17 11" fill="none"><path d="M1 0.5V10.5M16 0.5V10.5" stroke="#333" stroke-width="1.4"/><rect x="4" y="1" width="9" height="9" stroke="#333" stroke-width="1.4"/></svg>
<div style="position:absolute;left:49px;top:670px;width:1px;height:22px;background:#dcdce0"></div>
<div style="position:absolute;left:178px;top:670px;width:1px;height:22px;background:#dcdce0"></div>
<div style="position:absolute;left:219px;top:670px;width:1px;height:22px;background:#dcdce0"></div>
<div style="position:absolute;left:292px;top:670px;width:1px;height:22px;background:#dcdce0"></div>
<div style="position:absolute;left:789px;top:670px;width:1px;height:22px;background:#dcdce0"></div>
<div style="position:absolute;left:881px;top:670px;width:1px;height:22px;background:#dcdce0"></div>
<div style="position:absolute;left:1025px;top:670px;width:1px;height:22px;background:#dcdce0"></div>
<div style="position:absolute;left:1253px;top:670px;width:1px;height:22px;background:#dcdce0"></div>
<div class="t" style="left:66px;top:673px;font-size:14px;line-height:18px;color:#222;font-weight:normal;">頁-1</div>
<svg style="position:absolute;left:158.5px;top:677.0px" width="7" height="4" viewBox="0 0 7 4" fill="none"><path d="M0 0H7L3.5 4Z" fill="#666"/></svg>
<svg style="position:absolute;left:194px;top:675px" width="11" height="11" viewBox="0 0 11 11" fill="none"><path d="M5.5 0.5V10.5M0.5 5.5H10.5" stroke="#333" stroke-width="1.5"/></svg>
<div class="t" style="left:244px;top:673px;font-size:14px;line-height:18px;color:#1677ff;font-weight:bold;">頁-1</div>
<div class="t" style="left:798px;top:673px;font-size:12px;line-height:16px;color:#333;font-weight:normal;letter-spacing:0.3px">形狀數量：11</div>
<svg style="position:absolute;left:892px;top:674px" width="18" height="15" viewBox="0 0 18 15" fill="none"><path d="M9 1L17 5L9 9L1 5Z" stroke="#333" stroke-width="1.4" stroke-linejoin="round"/><path d="M1.5 9L9 13L16.5 9" stroke="#333" stroke-width="1.4" stroke-linejoin="round"/></svg>
<svg style="position:absolute;left:914.0px;top:679.5px" width="5" height="3" viewBox="0 0 5 3" fill="none"><path d="M0 0H5L2.5 3Z" fill="#888"/></svg>
<svg style="position:absolute;left:936px;top:674px" width="15" height="15" viewBox="0 0 15 15" fill="none"><path d="M1 4.5V1H4.5M10.5 1H14V4.5M14 10.5V14H10.5M4.5 14H1V10.5" stroke="#333" stroke-width="1.4"/><rect x="5" y="4.5" width="5" height="6" stroke="#333" stroke-width="1.3"/></svg>
<div class="t" style="left:959px;top:673px;font-size:12px;line-height:16px;color:#222;font-weight:normal;letter-spacing:1px">專注</div>
<svg style="position:absolute;left:997px;top:673px" width="16" height="16" viewBox="0 0 16 16" fill="none"><circle cx="8" cy="8" r="7.2" stroke="#333" stroke-width="1.3"/><path d="M6.3 5V11L11 8Z" stroke="#333" stroke-width="1.3" stroke-linejoin="round"/></svg>
<svg style="position:absolute;left:1036px;top:680px" width="12" height="2" viewBox="0 0 12 2" fill="none"><path d="M0 1H11.5" stroke="#333" stroke-width="1.3"/></svg>
<div style="position:absolute;left:1058px;top:679px;width:96px;height:3px;background:#fff;border-radius:2px"></div>
<div style="position:absolute;left:1058px;top:679px;width:28px;height:3px;background:#333;border-radius:2px"></div>
<div style="position:absolute;left:1079.5px;top:674.5px;width:9px;height:9px;border:2px solid #333;background:#fff;border-radius:50%"></div>
<svg style="position:absolute;left:1165px;top:675px" width="12" height="12" viewBox="0 0 12 12" fill="none"><path d="M6 0.5V11.5M0.5 6H11.5" stroke="#333" stroke-width="1.4"/></svg>
<div class="t" style="left:1196px;top:672px;font-size:13px;line-height:18px;color:#333;font-weight:normal;">115%</div>
<svg style="position:absolute;left:1235.5px;top:679.5px" width="6" height="3" viewBox="0 0 6 3" fill="none"><path d="M0 0H6L3.0 3Z" fill="#888"/></svg>
<svg style="position:absolute;left:1265px;top:674px" width="18" height="15" viewBox="0 0 18 15" fill="none"><path d="M1 2.5L6 1L12 2.5L17 1V13L12 14.5L6 13L1 14.5Z" stroke="#333" stroke-width="1.4" stroke-linejoin="round"/><path d="M6 1V13M12 2.5V14.5" stroke="#333" stroke-width="1.4"/></svg>
<svg style="position:absolute;left:1298px;top:673px" width="16" height="16" viewBox="0 0 16 16" fill="none"><path d="M1 5V1H5M11 1H15V5M15 11V15H11M5 15H1V11" stroke="#333" stroke-width="1.5"/><rect x="4.5" y="5.5" width="7" height="5" stroke="#333" stroke-width="1.4"/></svg>
<div style="position:absolute;left:0px;top:696px;width:1335px;height:2px;background:#fff"></div>
<svg style="position:absolute;left:0;top:696px" width="1335" height="2"><rect x="4" y="0" width="1" height="2" fill="#444"/><rect x="7" y="0" width="1" height="2" fill="#36a"/><rect x="23" y="0" width="1" height="2" fill="#36a"/><rect x="26" y="1" width="1" height="2" fill="#333"/><rect x="29" y="0" width="1" height="2" fill="#333"/><rect x="33" y="1" width="1" height="2" fill="#222"/><rect x="38" y="1" width="1" height="2" fill="#222"/><rect x="42" y="1" width="1" height="2" fill="#222"/><rect x="45" y="0" width="1" height="2" fill="#36a"/><rect x="50" y="0" width="2" height="2" fill="#111"/><rect x="55" y="0" width="1" height="2" fill="#333"/><rect x="60" y="0" width="2" height="2" fill="#444"/><rect x="66" y="0" width="1" height="2" fill="#36a"/><rect x="70" y="0" width="1" height="2" fill="#c73"/><rect x="73" y="1" width="1" height="2" fill="#36a"/><rect x="78" y="1" width="1" height="2" fill="#c73"/><rect x="91" y="0" width="1" height="2" fill="#444"/><rect x="94" y="1" width="1" height="2" fill="#36a"/><rect x="100" y="0" width="1" height="2" fill="#444"/><rect x="103" y="0" width="1" height="2" fill="#36a"/><rect x="119" y="0" width="1" height="2" fill="#c73"/><rect x="122" y="0" width="1" height="2" fill="#111"/><rect x="128" y="0" width="1" height="2" fill="#c73"/><rect x="134" y="0" width="1" height="2" fill="#333"/><rect x="138" y="0" width="1" height="2" fill="#36a"/><rect x="143" y="0" width="1" height="2" fill="#36a"/><rect x="148" y="1" width="1" height="2" fill="#36a"/><rect x="151" y="1" width="2" height="2" fill="#444"/><rect x="158" y="1" width="1" height="2" fill="#c73"/><rect x="171" y="0" width="1" height="2" fill="#222"/><rect x="182" y="0" width="2" height="2" fill="#36a"/><rect x="186" y="1" width="1" height="2" fill="#333"/><rect x="191" y="0" width="1" height="2" fill="#c73"/><rect x="194" y="0" width="2" height="2" fill="#c73"/><rect x="201" y="0" width="1" height="2" fill="#444"/><rect x="206" y="0" width="1" height="2" fill="#36a"/><rect x="210" y="1" width="1" height="2" fill="#333"/><rect x="213" y="0" width="1" height="2" fill="#444"/><rect x="218" y="0" width="2" height="2" fill="#111"/><rect x="224" y="0" width="1" height="2" fill="#333"/><rect x="230" y="0" width="1" height="2" fill="#36a"/><rect x="235" y="0" width="2" height="2" fill="#111"/><rect x="241" y="0" width="1" height="2" fill="#111"/><rect x="246" y="0" width="1" height="2" fill="#333"/><rect x="250" y="1" width="1" height="2" fill="#c73"/><rect x="253" y="0" width="1" height="2" fill="#444"/><rect x="256" y="0" width="1" height="2" fill="#333"/><rect x="260" y="1" width="1" height="2" fill="#222"/><rect x="266" y="1" width="1" height="2" fill="#222"/><rect x="270" y="1" width="1" height="2" fill="#333"/><rect x="276" y="0" width="1" height="2" fill="#36a"/><rect x="281" y="0" width="1" height="2" fill="#222"/><rect x="284" y="0" width="2" height="2" fill="#c73"/><rect x="298" y="0" width="1" height="2" fill="#36a"/><rect x="303" y="1" width="2" height="2" fill="#222"/><rect x="309" y="0" width="1" height="2" fill="#36a"/><rect x="313" y="0" width="1" height="2" fill="#222"/><rect x="317" y="0" width="1" height="2" fill="#333"/><rect x="321" y="0" width="1" height="2" fill="#36a"/><rect x="326" y="0" width="1" height="2" fill="#c73"/><rect x="329" y="1" width="1" height="2" fill="#222"/><rect x="335" y="0" width="1" height="2" fill="#222"/><rect x="340" y="0" width="1" height="2" fill="#36a"/><rect x="345" y="1" width="1" height="2" fill="#c73"/><rect x="349" y="1" width="2" height="2" fill="#111"/><rect x="354" y="0" width="1" height="2" fill="#222"/><rect x="360" y="0" width="1" height="2" fill="#c73"/><rect x="364" y="1" width="1" height="2" fill="#333"/><rect x="369" y="0" width="2" height="2" fill="#c73"/><rect x="373" y="0" width="1" height="2" fill="#444"/><rect x="377" y="0" width="2" height="2" fill="#c73"/><rect x="384" y="0" width="1" height="2" fill="#444"/><rect x="387" y="0" width="1" height="2" fill="#444"/><rect x="393" y="0" width="1" height="2" fill="#36a"/><rect x="396" y="0" width="1" height="2" fill="#222"/><rect x="401" y="0" width="2" height="2" fill="#333"/><rect x="406" y="0" width="2" height="2" fill="#444"/><rect x="413" y="0" width="2" height="2" fill="#36a"/><rect x="425" y="0" width="1" height="2" fill="#222"/><rect x="428" y="1" width="2" height="2" fill="#222"/><rect x="440" y="0" width="1" height="2" fill="#36a"/><rect x="445" y="0" width="1" height="2" fill="#444"/><rect x="448" y="0" width="1" height="2" fill="#333"/><rect x="453" y="0" width="1" height="2" fill="#333"/><rect x="459" y="0" width="1" height="2" fill="#111"/><rect x="470" y="1" width="1" height="2" fill="#333"/><rect x="476" y="1" width="1" height="2" fill="#444"/><rect x="482" y="1" width="1" height="2" fill="#c73"/><rect x="487" y="0" width="2" height="2" fill="#111"/><rect x="492" y="0" width="1" height="2" fill="#222"/><rect x="505" y="0" width="1" height="2" fill="#444"/><rect x="510" y="0" width="1" height="2" fill="#222"/><rect x="514" y="0" width="1" height="2" fill="#111"/><rect x="519" y="0" width="1" height="2" fill="#333"/><rect x="524" y="0" width="1" height="2" fill="#111"/><rect x="527" y="0" width="1" height="2" fill="#333"/><rect x="537" y="0" width="1" height="2" fill="#c73"/><rect x="542" y="1" width="1" height="2" fill="#36a"/><rect x="546" y="0" width="1" height="2" fill="#36a"/><rect x="551" y="1" width="1" height="2" fill="#111"/><rect x="569" y="0" width="1" height="2" fill="#36a"/><rect x="572" y="1" width="1" height="2" fill="#444"/><rect x="582" y="0" width="1" height="2" fill="#222"/><rect x="588" y="1" width="1" height="2" fill="#444"/><rect x="592" y="1" width="1" height="2" fill="#222"/><rect x="595" y="0" width="1" height="2" fill="#444"/><rect x="600" y="1" width="2" height="2" fill="#333"/><rect x="605" y="0" width="1" height="2" fill="#c73"/><rect x="621" y="0" width="1" height="2" fill="#444"/><rect x="624" y="1" width="1" height="2" fill="#444"/><rect x="629" y="0" width="1" height="2" fill="#c73"/><rect x="635" y="0" width="1" height="2" fill="#444"/><rect x="641" y="0" width="1" height="2" fill="#c73"/><rect x="647" y="0" width="2" height="2" fill="#36a"/><rect x="653" y="0" width="2" height="2" fill="#222"/><rect x="674" y="0" width="1" height="2" fill="#111"/><rect x="678" y="1" width="2" height="2" fill="#222"/><rect x="682" y="0" width="1" height="2" fill="#111"/><rect x="687" y="0" width="1" height="2" fill="#333"/><rect x="693" y="1" width="1" height="2" fill="#c73"/><rect x="699" y="0" width="1" height="2" fill="#c73"/><rect x="705" y="0" width="2" height="2" fill="#222"/><rect x="711" y="1" width="1" height="2" fill="#333"/><rect x="714" y="0" width="1" height="2" fill="#111"/><rect x="720" y="0" width="2" height="2" fill="#222"/><rect x="727" y="0" width="2" height="2" fill="#111"/><rect x="731" y="0" width="1" height="2" fill="#333"/><rect x="736" y="0" width="1" height="2" fill="#111"/><rect x="739" y="1" width="1" height="2" fill="#36a"/><rect x="743" y="0" width="1" height="2" fill="#444"/><rect x="749" y="0" width="1" height="2" fill="#111"/><rect x="752" y="0" width="1" height="2" fill="#333"/><rect x="758" y="1" width="1" height="2" fill="#444"/><rect x="763" y="1" width="1" height="2" fill="#c73"/><rect x="791" y="0" width="1" height="2" fill="#333"/><rect x="796" y="1" width="1" height="2" fill="#333"/><rect x="800" y="0" width="1" height="2" fill="#36a"/><rect x="805" y="0" width="1" height="2" fill="#36a"/><rect x="808" y="1" width="1" height="2" fill="#c73"/><rect x="812" y="0" width="1" height="2" fill="#222"/><rect x="817" y="1" width="1" height="2" fill="#444"/><rect x="830" y="0" width="1" height="2" fill="#c73"/><rect x="833" y="1" width="1" height="2" fill="#c73"/><rect x="851" y="0" width="2" height="2" fill="#36a"/><rect x="858" y="0" width="1" height="2" fill="#333"/><rect x="861" y="0" width="1" height="2" fill="#444"/><rect x="864" y="0" width="1" height="2" fill="#333"/><rect x="867" y="1" width="1" height="2" fill="#333"/><rect x="872" y="0" width="1" height="2" fill="#222"/><rect x="875" y="0" width="2" height="2" fill="#333"/><rect x="881" y="1" width="1" height="2" fill="#222"/><rect x="886" y="1" width="1" height="2" fill="#111"/><rect x="890" y="0" width="1" height="2" fill="#333"/><rect x="896" y="0" width="1" height="2" fill="#222"/><rect x="902" y="0" width="1" height="2" fill="#222"/><rect x="906" y="0" width="2" height="2" fill="#333"/><rect x="910" y="1" width="1" height="2" fill="#111"/><rect x="916" y="1" width="1" height="2" fill="#444"/><rect x="919" y="0" width="2" height="2" fill="#111"/><rect x="924" y="0" width="1" height="2" fill="#111"/><rect x="930" y="0" width="2" height="2" fill="#c73"/><rect x="934" y="0" width="1" height="2" fill="#c73"/><rect x="946" y="0" width="1" height="2" fill="#333"/><rect x="952" y="0" width="2" height="2" fill="#444"/><rect x="956" y="1" width="1" height="2" fill="#333"/><rect x="974" y="0" width="2" height="2" fill="#c73"/><rect x="1000" y="0" width="1" height="2" fill="#333"/><rect x="1005" y="0" width="1" height="2" fill="#c73"/><rect x="1008" y="0" width="1" height="2" fill="#36a"/><rect x="1012" y="0" width="1" height="2" fill="#c73"/><rect x="1018" y="0" width="1" height="2" fill="#c73"/><rect x="1031" y="1" width="1" height="2" fill="#333"/><rect x="1034" y="0" width="1" height="2" fill="#111"/><rect x="1037" y="0" width="1" height="2" fill="#111"/><rect x="1071" y="0" width="1" height="2" fill="#111"/><rect x="1077" y="1" width="1" height="2" fill="#222"/><rect x="1082" y="0" width="1" height="2" fill="#36a"/><rect x="1087" y="0" width="1" height="2" fill="#36a"/><rect x="1091" y="0" width="1" height="2" fill="#c73"/><rect x="1094" y="0" width="1" height="2" fill="#333"/><rect x="1097" y="0" width="1" height="2" fill="#222"/><rect x="1100" y="0" width="2" height="2" fill="#c73"/><rect x="1105" y="0" width="1" height="2" fill="#444"/><rect x="1108" y="1" width="1" height="2" fill="#111"/><rect x="1113" y="0" width="1" height="2" fill="#333"/><rect x="1117" y="1" width="1" height="2" fill="#111"/><rect x="1121" y="1" width="1" height="2" fill="#333"/><rect x="1125" y="0" width="1" height="2" fill="#c73"/><rect x="1137" y="0" width="2" height="2" fill="#222"/><rect x="1151" y="0" width="2" height="2" fill="#333"/><rect x="1157" y="0" width="1" height="2" fill="#36a"/><rect x="1171" y="0" width="1" height="2" fill="#333"/><rect x="1175" y="1" width="1" height="2" fill="#444"/><rect x="1179" y="1" width="2" height="2" fill="#c73"/><rect x="1185" y="0" width="1" height="2" fill="#333"/><rect x="1191" y="0" width="1" height="2" fill="#222"/><rect x="1195" y="0" width="1" height="2" fill="#333"/><rect x="1200" y="0" width="1" height="2" fill="#111"/><rect x="1203" y="0" width="1" height="2" fill="#111"/><rect x="1220" y="0" width="1" height="2" fill="#c73"/><rect x="1223" y="0" width="1" height="2" fill="#222"/><rect x="1229" y="0" width="1" height="2" fill="#333"/><rect x="1240" y="1" width="2" height="2" fill="#222"/><rect x="1246" y="0" width="1" height="2" fill="#111"/><rect x="1250" y="0" width="2" height="2" fill="#222"/><rect x="1257" y="0" width="1" height="2" fill="#333"/><rect x="1261" y="0" width="1" height="2" fill="#c73"/><rect x="1264" y="1" width="1" height="2" fill="#222"/><rect x="1268" y="0" width="2" height="2" fill="#36a"/><rect x="1273" y="0" width="1" height="2" fill="#333"/><rect x="1279" y="0" width="1" height="2" fill="#111"/><rect x="1283" y="0" width="1" height="2" fill="#333"/><rect x="1286" y="1" width="1" height="2" fill="#c73"/><rect x="1292" y="1" width="1" height="2" fill="#111"/><rect x="1298" y="1" width="1" height="2" fill="#c73"/><rect x="1303" y="0" width="1" height="2" fill="#222"/><rect x="1309" y="0" width="1" height="2" fill="#36a"/><rect x="1313" y="0" width="1" height="2" fill="#222"/><rect x="1318" y="1" width="1" height="2" fill="#c73"/></svg>
<svg style="position:absolute;left:0;top:0" width="1" height="698"><rect x="0" y="8" width="1" height="2" fill="#335"/><rect x="0" y="22" width="1" height="3" fill="#c63"/><rect x="0" y="44" width="1" height="2" fill="#235"/><rect x="0" y="60" width="1" height="2" fill="#f93"/><rect x="0" y="78" width="1" height="3" fill="#124"/><rect x="0" y="96" width="1" height="2" fill="#e94"/><rect x="0" y="118" width="1" height="2" fill="#333"/><rect x="0" y="134" width="1" height="1" fill="#222"/><rect x="0" y="140" width="1" height="2" fill="#333"/><rect x="0" y="158" width="1" height="1" fill="#333"/><rect x="0" y="172" width="1" height="3" fill="#36c"/><rect x="0" y="184" width="1" height="2" fill="#c53"/><rect x="0" y="208" width="1" height="1" fill="#333"/><rect x="0" y="218" width="1" height="2" fill="#222"/><rect x="0" y="226" width="1" height="2" fill="#333"/><rect x="0" y="254" width="1" height="2" fill="#28c"/><rect x="0" y="268" width="1" height="3" fill="#c52"/><rect x="0" y="290" width="1" height="2" fill="#333"/><rect x="0" y="318" width="1" height="2" fill="#f93"/><rect x="0" y="340" width="1" height="2" fill="#333"/><rect x="0" y="372" width="1" height="3" fill="#36c"/><rect x="0" y="396" width="1" height="2" fill="#c53"/><rect x="0" y="430" width="1" height="2" fill="#333"/><rect x="0" y="452" width="1" height="2" fill="#fa4"/><rect x="0" y="470" width="1" height="3" fill="#222"/><rect x="0" y="500" width="1" height="2" fill="#c53"/><rect x="0" y="532" width="1" height="3" fill="#36c"/><rect x="0" y="560" width="1" height="2" fill="#333"/><rect x="0" y="590" width="1" height="3" fill="#c53"/><rect x="0" y="612" width="1" height="2" fill="#333"/><rect x="0" y="640" width="1" height="3" fill="#a33"/><rect x="0" y="660" width="1" height="2" fill="#36c"/></svg>
</body></html>
